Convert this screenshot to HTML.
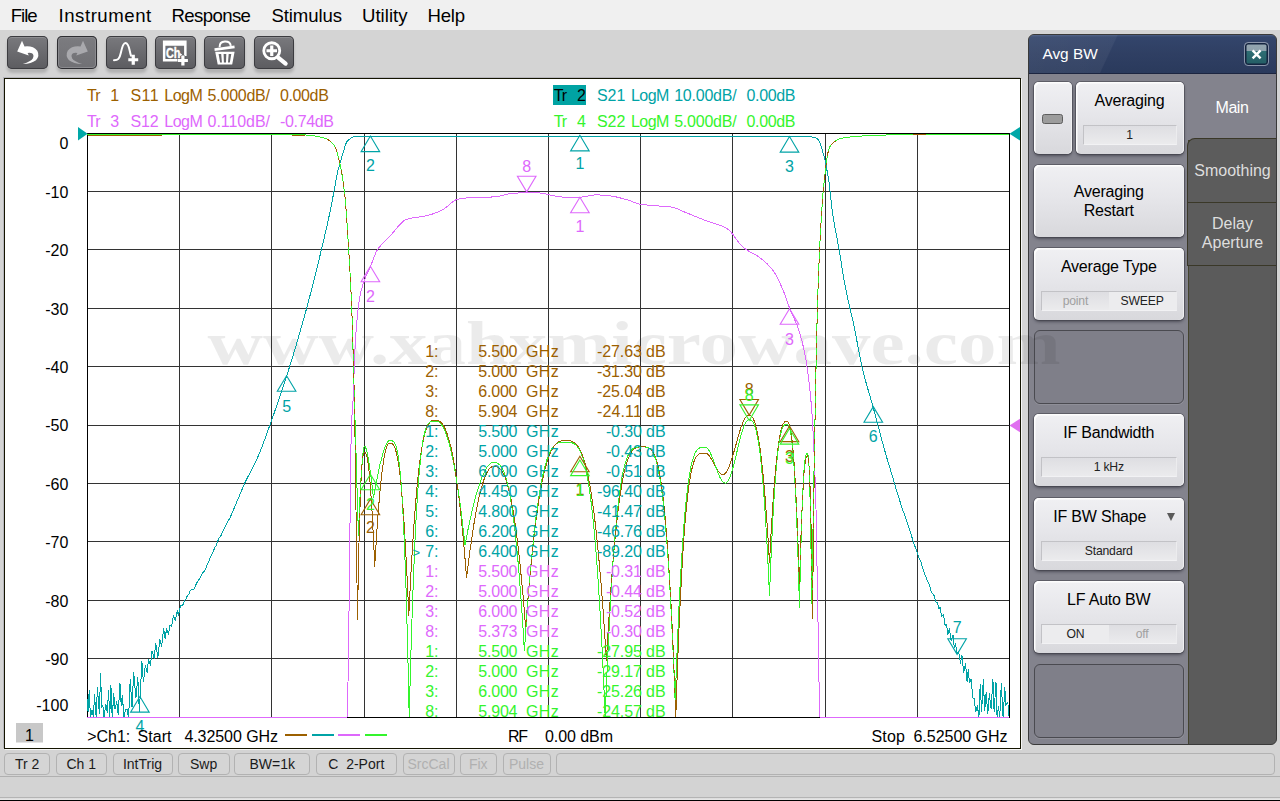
<!DOCTYPE html>
<html lang="en"><head><meta charset="utf-8"><title>Network Analyzer - Avg BW</title>
<style>
html,body{margin:0;padding:0;}
body{width:1280px;height:801px;position:relative;overflow:hidden;background:#d4d4d4;font-family:"Liberation Sans",sans-serif;color:#000;}
.abs{position:absolute;white-space:pre;}
#menubar{position:absolute;left:0;top:0;width:1280px;height:31px;background:#f0f0f0;}
.mi{position:absolute;top:3.8px;font-size:18.6px;line-height:24px;color:#000;white-space:pre;}
#toolbar{position:absolute;left:0;top:30px;width:1280px;height:48px;background:#d4d4d4;}
.tb{position:absolute;top:5.7px;width:40.6px;height:33px;border-radius:5px;box-sizing:border-box;
 background:linear-gradient(#7a7a7e 0%,#6c6c70 45%,#5c5c60 100%);box-shadow:0 4px 3px rgba(0,0,0,.17), inset 0 0 0 1px #3c3c40, inset 0 2px 0 rgba(255,255,255,.16);}
.tb.dis{background:linear-gradient(#7c7c80,#707074);box-shadow:0 4px 3px rgba(0,0,0,.17), inset 0 0 0 1px #2e2e32, inset 0 0 0 2px #8a8a8e;}
.tb svg{position:absolute;left:0;top:0;}
#plotpanel{position:absolute;left:4px;top:78px;width:1017px;height:671px;box-sizing:border-box;background:#fff;border:1px solid #141400;box-shadow:1px 1px 0 #f6f6f6,-1px -1px 0 #b6b6bc;}
#plotedge{display:none}
#status{position:absolute;left:0;top:750px;width:1280px;height:26px;background:#d3d3d3;}
.sb{position:absolute;top:3px;height:22px;box-sizing:border-box;border:1px solid #b2b2b2;border-radius:4px;background:#d5d5d5;
 font-size:14px;line-height:20px;text-align:center;color:#1a1a1a;white-space:pre;}
.sb.dis{color:#b0b0b0;background:#d4d4d4;}
#bottom{position:absolute;left:0;top:776px;width:1280px;height:25px;background:#d3d3d3;border-top:1px solid #b0b0b0;box-sizing:border-box;}
#bottom i{position:absolute;left:0;top:20px;width:1280px;height:1px;background:#b4b4b4;}
#bottom u{position:absolute;left:0;top:21px;width:1280px;height:2px;background:linear-gradient(#dadada,#e8e8e8);}
#bottom b{position:absolute;left:0;top:23px;width:1280px;height:1px;background:#000;}
/* side panel */
#side{position:absolute;left:1028px;top:34px;width:249px;height:711px;background:#5b5b5b;border-radius:6px;border:1px solid #3a3a3a;box-sizing:border-box;overflow:hidden;}
#shead{position:absolute;left:0;top:0;width:249px;height:38px;background:linear-gradient(115deg,rgba(255,255,255,.07) 0,rgba(255,255,255,.05) 33%,rgba(255,255,255,0) 33.5%),linear-gradient(#4a5d85 0,#33456b 2px,#2f3f63 50%,#2a3a5c 100%);border-bottom:1px solid #1c2540;}
#shead span{position:absolute;left:13.4px;top:8px;font-size:15.4px;line-height:22px;color:#fff;}
#sclose{position:absolute;left:215px;top:7px;width:25px;height:24px;border:1px solid #8a94aa;border-radius:4px;box-sizing:border-box;background:linear-gradient(#93a5b0 0%,#8fa2ad 36%,#2e6e74 37%,#245c64 100%);box-shadow:inset 0 0 0 1.5px #152540;}
#scol{position:absolute;left:0;top:39px;width:159px;height:672px;background:#83838d;border-right:1px solid #44442e;}
.tab{position:absolute;left:160px;width:87px;box-sizing:border-box;color:#dedede;font-size:16px;text-align:center;line-height:19px;}
#tab1{top:39px;height:66px;left:159px;width:88px;background:#83838d;color:#fff;letter-spacing:-0.45px;}
#tab2{top:103px;height:65px;left:158px;width:89px;padding-left:1px;background:#5c5c5c;border:1px solid #3a3828;border-right:none;border-top-left-radius:8px;}
#tab3{top:167px;height:64px;left:158px;width:89px;padding-left:1px;background:#5c5c5c;border:1px solid #3a3828;border-right:none;}
.kb{position:absolute;box-sizing:border-box;border-radius:5px;
 background:linear-gradient(#f0f0f3 0%,#e6e6ea 45%,#d8d8dc 100%);box-shadow:0 0 0 1px rgba(64,64,72,.55),0 2px 3px rgba(30,30,40,.5),inset 1.5px 1.5px 0 #fdfdfd,inset -1px 0 0 #f0f0f2;color:#000;font-size:16px;text-align:center;}
.kb .t{position:absolute;left:0;width:100%;text-align:center;white-space:pre;line-height:19px;letter-spacing:-0.2px;}
.kb .v{position:absolute;left:7px;right:7px;bottom:8.6px;height:20px;box-sizing:border-box;border:1px solid #c2c2c6;border-bottom-color:#f2f2f4;border-right-color:#ececee;
 background:linear-gradient(#dedee2,#ebebed);font-size:12.2px;letter-spacing:-0.2px;line-height:18px;color:#222;text-align:center;}
.kb .v .h{position:absolute;top:0;height:18px;width:50%;}
.slot{position:absolute;box-sizing:border-box;border-radius:6px;border:1px solid #4a4a50;background:#7f7f89;box-shadow:0 1px 0 rgba(255,255,255,.10),1px 0 0 rgba(255,255,255,.06);}
</style></head><body>
<div id="menubar"><span class="mi" style="left:10.8px;letter-spacing:-1.06px">File</span><span class="mi" style="left:58.5px;letter-spacing:0.54px">Instrument</span><span class="mi" style="left:171.5px;letter-spacing:-0.61px">Response</span><span class="mi" style="left:271.5px;letter-spacing:-0.12px">Stimulus</span><span class="mi" style="left:362.0px;letter-spacing:0.01px">Utility</span><span class="mi" style="left:427.5px;letter-spacing:-0.25px">Help</span></div>
<div id="toolbar"><div class="tb" style="left:7.3px"><svg width="41" height="33" viewBox="0 0 41 33"><path d="M15 4.8 L10.2 15.4 L21.8 19.6 L20.6 17 Q23 16.2 25 17.3 Q27.5 19 25.8 22.5 Q24 25.5 15.9 27.9 Q24 28 29 24.2 Q33 20 30.3 14.8 Q26 9.5 17.5 10.5 Z" fill="#fff"/></svg></div><div class="tb dis" style="left:56.9px"><svg width="41" height="33" viewBox="0 0 41 33"><path d="M26 4.8 L30.8 15.4 L19.2 19.6 L20.4 17 Q18 16.2 16 17.3 Q13.5 19 15.2 22.5 Q17 25.5 25.1 27.9 Q17 28 12 24.2 Q8 20 10.7 14.8 Q15 9.5 23.5 10.5 Z" fill="#a9a9ad"/></svg></div><div class="tb" style="left:106.2px"><svg width="41" height="33" viewBox="0 0 41 33"><path d="M8 24.2 C12 24.2 13.5 23 14.8 17 C16.5 9 17.8 7 19.4 7 C21.5 7 22.8 10 23.8 15 C24.3 17.5 24.6 18.5 25 19.8" fill="none" stroke="#fff" stroke-width="2" stroke-linecap="round"/><path d="M25.65 18.8 h3.2 v3.35 h3.35 v3.2 h-3.35 v3.35 h-3.2 v-3.35 h-3.35 v-3.2 h3.35 z" fill="#fff"/></svg></div><div class="tb" style="left:155.3px"><svg width="41" height="33" viewBox="0 0 41 33"><path d="M7.9 4.5 H31.6 V20 H29.1 V9.75 H10.4 V22.9 H23 V25.4 H7.9 Z" fill="#fff"/><text x="11" y="21.6" font-family="Liberation Sans, sans-serif" font-weight="bold" font-size="14" fill="#fff" stroke="#fff" stroke-width="0.4" textLength="14.4" lengthAdjust="spacingAndGlyphs">Ch</text><path d="M24.6 16.8 L27.2 18.6 L24.6 20.4 Z" fill="#fff"/><path d="M26.3 19.5 h3.2 v3.4 h3.4 v3.2 h-3.4 v3.4 h-3.2 v-3.4 h-3.4 v-3.2 h3.4 z" fill="#fff" stroke="#646468" stroke-width="0.8" paint-order="stroke"/></svg></div><div class="tb" style="left:204.4px"><svg width="41" height="33" viewBox="0 0 41 33"><path d="M15.6 11.2 Q15.4 5.8 20.8 5.5 Q26.2 5.2 26.8 9.8" fill="none" stroke="#fff" stroke-width="2"/><path d="M10.4 12.2 L30.4 9.4 L30.7 12.2 L10.7 15 Z" fill="#fff"/><path d="M11.2 15.8 H30.6 L28.2 28.6 H13.7 Z M14.6 18 L16.1 26.4 H17.9 L17.2 18 Z M19.6 18 L19.9 26.4 H22 L22.3 18 Z M24.7 18 L24 26.4 H25.8 L27.3 18 Z" fill="#fff" fill-rule="evenodd"/></svg></div><div class="tb" style="left:253.6px"><svg width="41" height="33" viewBox="0 0 41 33"><circle cx="17.75" cy="14.75" r="8" fill="none" stroke="#fff" stroke-width="2.8"/><path d="M24.2 21.6 L31.6 27.6" stroke="#fff" stroke-width="4.2" stroke-linecap="round"/><path d="M16.15 9.5 h3.2 v3.65 h3.65 v3.2 h-3.65 v3.65 h-3.2 v-3.65 h-3.65 v-3.2 h3.65 z" fill="#fff"/></svg></div></div>
<div id="plotedge"></div><div id="plotpanel"></div>
<div id="status"><div class="sb" style="left:4.4px;width:45.6px">Tr 2</div><div class="sb" style="left:55.6px;width:51.4px">Ch 1</div><div class="sb" style="left:112.5px;width:60.0px">IntTrig</div><div class="sb" style="left:177.5px;width:52.2px">Swp</div><div class="sb" style="left:234.4px;width:75.6px">BW=1k</div><div class="sb" style="left:315.6px;width:81.4px">C  2-Port</div><div class="sb dis" style="left:402.5px;width:52.0px">SrcCal</div><div class="sb dis" style="left:459.5px;width:37.5px">Fix</div><div class="sb dis" style="left:502.5px;width:48.0px">Pulse</div><div class="sb dis" style="left:555.5px;width:719.5px"></div></div><div id="bottom"><i></i><u></u><b></b></div>
<div id="side"><div id="shead"><span>Avg BW</span><div id="sclose"><svg width="23" height="22" viewBox="0 0 23 22"><path d="M7.6 7.4 L15.6 15.4 M15.6 7.4 L7.6 15.4" stroke="#fff" stroke-width="2.4" stroke-linecap="butt"/></svg></div></div><div id="scol"></div><div class="tab" id="tab1"><div style="margin-top:24px">Main</div></div><div class="tab" id="tab2"><div style="margin-top:21.8px">Smoothing</div></div><div class="tab" id="tab3"><div style="margin-top:11px">Delay<br>Aperture</div></div><div class="kb" style="left:5.0px;top:47.0px;width:37.5px;height:72.0px"><div style="position:absolute;left:8.3px;top:32px;width:20.5px;height:9.5px;box-sizing:border-box;border:1px solid #5e5e5e;border-radius:2.5px;background:#9c9c9c"></div></div><div class="kb" style="left:46.5px;top:47.0px;width:108.0px;height:72.0px"><div class="t" style="top:9.3px">Averaging</div><div class="v">1</div></div><div class="kb" style="left:5.0px;top:130.0px;width:149.5px;height:72.0px"><div class="t" style="top:17.3px">Averaging<br>Restart</div></div><div class="kb" style="left:5.0px;top:213.0px;width:149.5px;height:72.0px"><div class="t" style="top:9.3px">Average Type</div><div class="v"><span class="h" style="left:0;color:#a0a0a0">point</span><span class="h" style="left:50%;background:#ececee">SWEEP</span></div></div><div class="slot" style="left:4.5px;top:295px;width:150px;height:74px"></div><div class="kb" style="left:5.0px;top:379.0px;width:149.5px;height:72.0px"><div class="t" style="top:9.3px">IF Bandwidth</div><div class="v">1 kHz</div></div><div class="kb" style="left:5.0px;top:463.0px;width:149.5px;height:72.0px"><div class="t" style="top:9.3px;left:-9px">IF BW Shape</div><div style="position:absolute;right:9px;top:15px;width:0;height:0;border-left:4.5px solid transparent;border-right:4.5px solid transparent;border-top:8px solid #5a5a5a"></div><div class="v">Standard</div></div><div class="kb" style="left:5.0px;top:546.0px;width:149.5px;height:72.0px"><div class="t" style="top:9.3px">LF Auto BW</div><div class="v"><span class="h" style="left:0;background:#ececee">ON</span><span class="h" style="left:50%;color:#a0a0a0">off</span></div></div><div class="slot" style="left:4.5px;top:628.5px;width:150px;height:74px"></div></div>
<svg id="plot" class="abs" style="left:0;top:0" width="1280" height="801" viewBox="0 0 1280 801" font-family="Liberation Sans, sans-serif" font-size="16">
<text x="207.5" y="364" font-family="Liberation Serif, serif" font-weight="bold" font-size="62" fill="rgba(0,0,0,0.078)" textLength="853" lengthAdjust="spacingAndGlyphs">www.xahxmicrowave.com</text>
<path d="M179.5 133 V718 M271.5 133 V718 M364.5 133 V718 M456.5 133 V718 M548.5 133 V718 M640.5 133 V718 M732.5 133 V718 M825.5 133 V718 M917.5 133 V718 M87 191.5 H1010 M87 249.5 H1010 M87 308.5 H1010 M87 366.5 H1010 M87 425.5 H1010 M87 483.5 H1010 M87 541.5 H1010 M87 600.5 H1010 M87 658.5 H1010" stroke="#333" stroke-width="1" fill="none" shape-rendering="crispEdges"/><path d="M87.5 133 V718 M1009.5 133 V718 M87 133.5 H1010 M87 717.5 H1010" stroke="#000" stroke-width="1" fill="none" shape-rendering="crispEdges"/>
<text x="68.3" y="149.0" fill="#000" text-anchor="end">0</text><text x="68.3" y="197.7" fill="#000" text-anchor="end">-10</text><text x="68.3" y="256.1" fill="#000" text-anchor="end">-20</text><text x="68.3" y="314.5" fill="#000" text-anchor="end">-30</text><text x="68.3" y="372.9" fill="#000" text-anchor="end">-40</text><text x="68.3" y="431.3" fill="#000" text-anchor="end">-50</text><text x="68.3" y="489.7" fill="#000" text-anchor="end">-60</text><text x="68.3" y="548.1" fill="#000" text-anchor="end">-70</text><text x="68.3" y="606.5" fill="#000" text-anchor="end">-80</text><text x="68.3" y="664.9" fill="#000" text-anchor="end">-90</text><text x="68.3" y="711.0" fill="#000" text-anchor="end">-100</text>
<text x="87.1" y="101.3" fill="#9c6000" textLength="13.5" lengthAdjust="spacing">Tr</text><text x="110.3" y="101.3" fill="#9c6000">1</text><text x="130.4" y="101.3" fill="#9c6000" textLength="28.3" lengthAdjust="spacing">S11</text><text x="164.3" y="101.3" fill="#9c6000" textLength="38.5" lengthAdjust="spacing">LogM</text><text x="207.6" y="101.3" fill="#9c6000" textLength="62.4" lengthAdjust="spacing">5.000dB/</text><text x="280.0" y="101.3" fill="#9c6000" textLength="48.8" lengthAdjust="spacing">0.00dB</text><text x="87.1" y="126.8" fill="#de68fc" textLength="13.5" lengthAdjust="spacing">Tr</text><text x="110.3" y="126.8" fill="#de68fc">3</text><text x="130.4" y="126.8" fill="#de68fc" textLength="28.3" lengthAdjust="spacing">S12</text><text x="164.3" y="126.8" fill="#de68fc" textLength="38.5" lengthAdjust="spacing">LogM</text><text x="207.6" y="126.8" fill="#de68fc" textLength="62.4" lengthAdjust="spacing">0.110dB/</text><text x="280.0" y="126.8" fill="#de68fc" textLength="54.0" lengthAdjust="spacing">-0.74dB</text><rect x="553" y="85" width="33" height="20" fill="#00a3a3"/><text x="553.7" y="101.3" fill="#000" textLength="13.5" lengthAdjust="spacing">Tr</text><text x="576.9" y="101.3" fill="#000">2</text><text x="597.0" y="101.3" fill="#00a3a6" textLength="28.3" lengthAdjust="spacing">S21</text><text x="630.9" y="101.3" fill="#00a3a6" textLength="38.5" lengthAdjust="spacing">LogM</text><text x="674.2" y="101.3" fill="#00a3a6" textLength="62.4" lengthAdjust="spacing">10.00dB/</text><text x="746.6" y="101.3" fill="#00a3a6" textLength="48.8" lengthAdjust="spacing">0.00dB</text><text x="553.7" y="126.8" fill="#34f42c" textLength="13.5" lengthAdjust="spacing">Tr</text><text x="576.9" y="126.8" fill="#34f42c">4</text><text x="597.0" y="126.8" fill="#34f42c" textLength="28.3" lengthAdjust="spacing">S22</text><text x="630.9" y="126.8" fill="#34f42c" textLength="38.5" lengthAdjust="spacing">LogM</text><text x="674.2" y="126.8" fill="#34f42c" textLength="62.4" lengthAdjust="spacing">5.000dB/</text><text x="746.6" y="126.8" fill="#34f42c" textLength="48.8" lengthAdjust="spacing">0.00dB</text>
<path d="M87.0 134.5 L88.0 134.5 L89.0 134.5 L90.0 134.5 L91.0 134.5 L92.0 134.5 L93.0 134.5 L94.0 134.5 L95.0 134.5 L96.0 134.5 L97.0 134.5 L98.0 134.5 L99.0 134.5 L100.0 134.5 L101.0 134.5 L102.0 134.5 L103.0 134.5 L104.0 134.5 L105.0 134.5 L106.0 134.5 L107.0 134.5 L108.0 134.5 L109.0 134.5 L110.0 134.5 L111.0 134.5 L112.0 134.5 L113.0 134.5 L114.1 134.5 L115.1 134.5 L116.1 134.5 L117.1 134.5 L118.1 134.5 L119.1 134.5 L120.1 134.5 L121.1 134.5 L122.1 134.5 L123.1 134.5 L124.1 134.5 L125.1 134.5 L126.1 134.5 L127.1 134.5 L128.1 134.5 L129.1 134.5 L130.1 134.5 L131.1 134.5 L132.1 134.5 L133.1 134.5 L134.1 134.5 L135.1 134.5 L136.1 134.5 L137.1 134.5 L138.1 134.5 L139.1 134.5 L140.1 134.5 L141.1 134.5 L142.1 134.5 L143.1 134.5 L144.1 134.5 L145.1 134.5 L146.1 134.5 L147.1 134.5 L148.1 134.5 L149.1 134.5 L150.1 134.5 L151.1 134.5 L152.1 134.5 L153.1 134.5 L154.1 134.5 L155.1 134.5 L156.1 134.5 L157.1 134.5 L158.1 134.5 L159.1 134.5 L160.1 134.5 L161.1 134.5 L162.1 134.5 L163.1 134.5 L164.1 134.5 L165.1 134.5 L166.1 134.5 L167.1 134.5 L168.2 134.5 L169.2 134.5 L170.2 134.5 L171.2 134.5 L172.2 134.5 L173.2 134.5 L174.2 134.5 L175.2 134.5 L176.2 134.5 L177.2 134.5 L178.2 134.5 L179.2 134.5 L180.2 134.5 L181.2 134.5 L182.2 134.5 L183.2 134.5 L184.2 134.5 L185.2 134.5 L186.2 134.5 L187.2 134.5 L188.2 134.5 L189.2 134.5 L190.2 134.5 L191.2 134.5 L192.2 134.5 L193.2 134.5 L194.2 134.5 L195.2 134.5 L196.2 134.5 L197.2 134.5 L198.2 134.5 L199.2 134.5 L200.2 134.5 L201.2 134.5 L202.2 134.5 L203.2 134.5 L204.2 134.5 L205.2 134.5 L206.2 134.5 L207.2 134.5 L208.2 134.5 L209.2 134.5 L210.2 134.5 L211.2 134.5 L212.2 134.5 L213.2 134.5 L214.2 134.5 L215.2 134.5 L216.2 134.5 L217.2 134.5 L218.2 134.5 L219.2 134.5 L220.2 134.5 L221.3 134.5 L222.3 134.5 L223.3 134.5 L224.3 134.5 L225.3 134.5 L226.3 134.5 L227.3 134.5 L228.3 134.5 L229.3 134.5 L230.3 134.5 L231.3 134.5 L232.3 134.5 L233.3 134.5 L234.3 134.5 L235.3 134.5 L236.3 134.5 L237.3 134.5 L238.3 134.5 L239.3 134.5 L240.3 134.5 L241.3 134.5 L242.3 134.5 L243.3 134.5 L244.3 134.5 L245.3 134.5 L246.3 134.5 L247.3 134.5 L248.3 134.5 L249.3 134.5 L250.3 134.5 L251.3 134.5 L252.3 134.5 L253.3 134.5 L254.3 134.5 L255.3 134.5 L256.3 134.5 L257.3 134.5 L258.3 134.5 L259.3 134.5 L260.3 134.5 L261.3 134.5 L262.3 134.5 L263.3 134.5 L264.3 134.5 L265.3 134.5 L266.3 134.5 L267.3 134.5 L268.3 134.5 L269.3 134.5 L270.3 134.5 L271.3 134.5 L272.3 134.5 L273.3 134.5 L274.4 134.5 L275.4 134.5 L276.4 134.5 L277.4 134.6 L278.4 134.6 L279.4 134.6 L280.4 134.6 L281.4 134.6 L282.4 134.6 L283.4 134.6 L284.4 134.6 L285.4 134.6 L286.4 134.6 L287.4 134.6 L288.4 134.6 L289.4 134.6 L290.4 134.6 L291.4 134.6 L292.4 134.6 L293.4 134.6 L294.4 134.6 L295.4 134.6 L296.4 134.6 L297.4 134.6 L298.4 134.6 L299.4 134.6 L300.4 134.6 L301.4 134.6 L302.4 134.7 L303.4 134.7 L304.4 134.8 L305.4 134.9 L306.4 135.0 L307.4 135.1 L308.4 135.2 L309.4 135.3 L310.4 135.4 L311.4 135.5 L312.4 135.7 L313.4 135.8 L314.4 135.9 L315.4 136.1 L316.4 136.3 L317.4 136.5 L318.4 136.7 L319.4 136.9 L320.4 137.1 L321.4 137.3 L322.4 137.5 L323.4 137.8 L324.4 138.1 L325.4 138.4 L326.4 138.8 L327.4 139.3 L328.5 139.9 L329.5 140.6 L330.5 141.5 L331.5 142.4 L332.5 143.5 L333.5 144.6 L334.5 145.9 L335.5 147.5 L336.5 149.8 L337.5 153.4 L338.5 157.9 L339.5 162.3 L340.5 166.5 L341.5 171.3 L342.5 177.5 L343.5 184.7 L344.5 192.1 L345.5 202.4 L346.5 215.5 L347.5 230.6 L348.5 246.6 L349.5 263.1 L350.5 281.2 L351.5 302.4 L352.5 330.1 L353.5 368.2 L354.5 400.0 L355.0 436.6 L355.5 473.2 L356.0 509.8 L356.5 546.3 L357.0 582.9 L357.5 619.5 L357.8 601.9 L358.1 585.4 L358.4 570.1 L358.7 556.0 L359.0 543.0 L359.3 531.0 L359.6 520.0 L359.9 510.1 L360.2 501.1 L360.5 493.0 L360.8 485.8 L361.1 479.5 L361.4 474.0 L361.7 469.2 L362.0 465.1 L362.3 461.7 L362.6 458.9 L362.9 456.7 L363.2 455.0 L363.5 453.8 L363.8 453.0 L364.1 452.5 L364.4 452.3 L364.7 452.3 L365.1 452.4 L365.5 452.9 L365.9 453.6 L366.4 454.8 L366.8 456.3 L367.2 458.2 L367.6 460.5 L368.0 463.2 L368.4 466.3 L368.9 469.9 L369.3 473.9 L369.7 478.3 L370.1 483.1 L370.5 488.4 L370.9 494.2 L371.4 500.4 L371.8 507.1 L372.2 514.2 L372.6 521.8 L373.0 529.9 L373.4 538.5 L373.9 547.5 L374.3 557.0 L374.7 567.0 L375.3 555.8 L376.0 545.2 L376.6 535.1 L377.2 525.6 L377.9 516.7 L378.5 508.3 L379.2 500.5 L379.8 493.3 L380.4 486.5 L381.1 480.3 L381.7 474.6 L382.4 469.5 L383.0 464.8 L383.6 460.6 L384.3 457.0 L384.9 453.7 L385.5 451.0 L386.2 448.7 L386.8 446.8 L387.4 445.3 L388.1 444.2 L388.7 443.5 L389.4 443.1 L390.0 443.0 L390.8 443.0 L391.6 443.2 L392.3 443.7 L393.1 444.4 L393.9 445.6 L394.7 447.3 L395.5 449.4 L396.2 452.2 L397.0 455.6 L397.8 459.7 L398.6 464.5 L399.4 470.1 L400.2 476.6 L400.9 483.9 L401.7 492.2 L402.5 501.5 L403.3 511.8 L404.1 523.1 L404.8 535.5 L405.6 549.1 L406.4 563.9 L407.2 579.8 L408.0 597.1 L408.8 615.6 L409.9 593.1 L411.0 572.4 L412.1 553.3 L413.2 535.9 L414.3 520.1 L415.4 505.7 L416.5 492.8 L417.6 481.2 L418.7 470.9 L419.8 461.8 L420.9 453.8 L422.0 446.9 L423.1 441.0 L424.2 436.1 L425.3 431.9 L426.4 428.6 L427.6 425.9 L428.7 423.9 L429.8 422.4 L430.9 421.4 L432.0 420.8 L433.1 420.5 L434.2 420.3 L435.3 420.3 L436.6 420.4 L437.9 420.6 L439.2 421.1 L440.5 422.0 L441.8 423.3 L443.1 425.0 L444.4 427.3 L445.7 430.0 L447.0 433.4 L448.3 437.5 L449.6 442.1 L451.0 447.5 L452.3 453.7 L453.6 460.5 L454.9 468.2 L456.2 476.8 L457.5 486.1 L458.8 496.4 L460.1 507.6 L461.4 519.7 L462.7 532.7 L464.0 546.8 L465.3 561.9 L466.6 578.0 L467.7 568.4 L468.9 559.2 L470.0 550.5 L471.2 542.3 L472.3 534.5 L473.4 527.1 L474.6 520.2 L475.7 513.7 L476.8 507.7 L478.0 502.1 L479.1 496.9 L480.2 492.2 L481.4 487.8 L482.5 483.9 L483.7 480.4 L484.8 477.3 L485.9 474.6 L487.1 472.4 L488.2 470.4 L489.3 468.9 L490.5 467.8 L491.6 467.0 L492.8 466.5 L493.9 466.4 L495.2 466.4 L496.5 466.7 L497.9 467.2 L499.2 468.0 L500.5 469.3 L501.8 471.0 L503.1 473.2 L504.5 476.0 L505.8 479.4 L507.1 483.5 L508.4 488.2 L509.8 493.6 L511.1 499.8 L512.4 506.8 L513.7 514.6 L515.0 523.3 L516.4 532.9 L517.7 543.4 L519.0 554.8 L520.3 567.2 L521.6 580.7 L523.0 595.1 L524.3 610.7 L525.6 627.3 L527.3 606.3 L528.9 587.0 L530.6 569.1 L532.2 552.7 L533.9 537.7 L535.5 524.1 L537.2 511.8 L538.8 500.7 L540.5 490.7 L542.1 481.9 L543.8 474.2 L545.5 467.5 L547.1 461.7 L548.8 456.7 L550.4 452.6 L552.1 449.2 L553.7 446.5 L555.4 444.5 L557.0 442.9 L558.7 441.8 L560.3 441.2 L562.0 440.8 L563.6 440.6 L565.3 440.6 L567.0 440.6 L568.7 440.7 L570.4 440.9 L572.1 441.4 L573.9 442.3 L575.6 443.6 L577.3 445.4 L579.0 447.9 L580.7 451.1 L582.4 455.2 L584.1 460.2 L585.8 466.2 L587.6 473.5 L589.3 482.0 L591.0 491.9 L592.7 503.2 L594.4 516.2 L596.1 530.8 L597.8 547.3 L599.5 565.8 L601.3 586.2 L603.0 608.8 L604.7 633.7 L606.4 661.0 L607.9 635.0 L609.4 611.1 L610.8 589.4 L612.3 569.8 L613.8 552.0 L615.3 536.0 L616.8 521.8 L618.2 509.2 L619.7 498.0 L621.2 488.3 L622.7 480.0 L624.1 472.8 L625.6 466.8 L627.1 461.8 L628.6 457.7 L630.1 454.4 L631.5 451.9 L633.0 450.0 L634.5 448.7 L636.0 447.8 L637.5 447.3 L638.9 447.0 L640.4 446.9 L641.9 446.9 L643.3 446.9 L644.7 446.9 L646.1 447.1 L647.5 447.4 L649.0 447.9 L650.4 448.9 L651.8 450.3 L653.2 452.3 L654.6 455.2 L656.0 458.9 L657.4 463.8 L658.8 469.9 L660.3 477.4 L661.7 486.6 L663.1 497.7 L664.5 510.8 L665.9 526.2 L667.3 544.0 L668.7 564.6 L670.1 588.2 L671.6 614.9 L673.0 645.1 L674.4 679.1 L675.8 717.0 L677.0 680.5 L678.2 647.7 L679.4 618.4 L680.7 592.5 L681.9 569.5 L683.1 549.5 L684.3 532.0 L685.5 516.9 L686.8 504.0 L688.0 493.0 L689.2 483.9 L690.4 476.3 L691.6 470.2 L692.8 465.3 L694.0 461.5 L695.3 458.6 L696.5 456.5 L697.7 455.1 L698.9 454.1 L700.1 453.5 L701.4 453.2 L702.6 453.0 L703.8 453.0 L705.0 453.0 L705.9 453.1 L706.8 453.5 L707.7 454.2 L708.6 455.1 L709.5 456.1 L710.4 457.4 L711.3 458.9 L712.2 460.4 L713.1 462.1 L714.0 463.8 L714.9 465.4 L715.8 467.1 L716.7 468.6 L717.6 470.1 L718.5 471.4 L719.4 472.4 L720.3 473.3 L721.2 474.0 L722.1 474.4 L723.0 474.5 L724.3 474.1 L725.6 473.0 L726.9 471.3 L728.1 468.8 L729.4 465.8 L730.7 462.3 L732.0 458.3 L733.3 454.0 L734.6 449.5 L735.9 444.9 L737.2 440.2 L738.5 435.7 L739.7 431.4 L741.0 427.4 L742.3 423.9 L743.6 420.9 L744.9 418.4 L746.2 416.7 L747.5 415.6 L748.8 415.2 L749.6 415.3 L750.5 415.5 L751.3 416.1 L752.2 417.1 L753.1 418.4 L753.9 420.2 L754.8 422.5 L755.7 425.3 L756.5 428.7 L757.4 432.6 L758.3 437.2 L759.1 442.4 L760.0 448.2 L760.9 454.8 L761.7 462.0 L762.6 470.0 L763.4 478.8 L764.3 488.3 L765.2 498.6 L766.0 509.8 L766.9 521.7 L767.8 534.5 L768.6 548.2 L769.5 562.8 L770.2 549.1 L770.9 536.3 L771.6 524.2 L772.3 512.9 L773.0 502.4 L773.7 492.6 L774.4 483.5 L775.1 475.2 L775.8 467.5 L776.5 460.5 L777.2 454.2 L777.9 448.5 L778.6 443.4 L779.3 438.9 L780.0 435.0 L780.7 431.7 L781.4 428.9 L782.1 426.6 L782.8 424.8 L783.5 423.4 L784.2 422.4 L784.9 421.8 L785.6 421.5 L786.2 421.4 L786.8 421.4 L787.4 421.7 L787.9 422.1 L788.5 422.9 L789.0 424.2 L789.6 425.8 L790.1 428.1 L790.7 430.8 L791.2 434.2 L791.8 438.3 L792.3 443.1 L792.9 448.6 L793.4 454.9 L794.0 462.1 L794.5 470.1 L795.1 479.1 L795.6 489.0 L796.2 499.9 L796.7 511.8 L797.3 524.7 L797.8 538.8 L798.4 554.0 L798.9 570.3 L799.5 587.8 L799.8 575.5 L800.1 563.9 L800.5 552.9 L800.8 542.6 L801.1 532.9 L801.5 523.9 L801.8 515.5 L802.1 507.7 L802.4 500.6 L802.8 494.0 L803.1 488.0 L803.4 482.6 L803.7 477.7 L804.0 473.4 L804.4 469.6 L804.7 466.3 L805.0 463.6 L805.3 461.2 L805.7 459.4 L806.0 457.9 L806.3 456.9 L806.6 456.2 L807.0 455.9 L807.3 455.8 L807.5 455.8 L807.7 456.1 L807.9 456.6 L808.2 457.4 L808.4 458.6 L808.6 460.3 L808.8 462.6 L809.0 465.4 L809.2 468.8 L809.5 472.8 L809.7 477.5 L809.9 483.0 L810.1 489.3 L810.3 496.3 L810.5 504.2 L810.8 513.0 L811.0 522.7 L811.2 533.3 L811.4 545.0 L811.6 557.6 L811.9 571.2 L812.1 586.0 L812.3 601.8 L812.5 618.8 L813.5 527.4 L814.5 450.3 L815.5 391.5 L816.5 343.0 L817.5 304.2 L818.5 275.0 L819.5 251.4 L820.5 231.6 L821.5 214.3 L822.5 199.1 L823.5 186.9 L824.5 178.5 L825.5 169.5 L826.5 160.8 L827.5 155.0 L828.5 150.1 L829.5 147.4 L830.5 145.8 L831.5 144.5 L832.6 143.4 L833.6 142.5 L834.6 141.6 L835.6 140.8 L836.6 140.2 L837.6 139.7 L838.6 139.3 L839.6 138.9 L840.6 138.6 L841.6 138.3 L842.6 138.0 L843.6 137.8 L844.6 137.6 L845.6 137.5 L846.6 137.3 L847.6 137.2 L848.6 137.1 L849.6 137.0 L850.6 136.9 L851.6 136.8 L852.6 136.7 L853.6 136.6 L854.6 136.5 L855.6 136.5 L856.6 136.4 L857.6 136.3 L858.6 136.2 L859.6 136.1 L860.6 136.1 L861.6 136.0 L862.6 135.9 L863.6 135.8 L864.6 135.8 L865.6 135.7 L866.6 135.7 L867.6 135.6 L868.6 135.6 L869.6 135.5 L870.6 135.5 L871.7 135.5 L872.7 135.4 L873.7 135.4 L874.7 135.4 L875.7 135.3 L876.7 135.3 L877.7 135.2 L878.7 135.2 L879.7 135.2 L880.7 135.1 L881.7 135.1 L882.7 135.1 L883.7 135.0 L884.7 135.0 L885.7 135.0 L886.7 134.9 L887.7 134.9 L888.7 134.9 L889.7 134.9 L890.7 134.8 L891.7 134.8 L892.7 134.8 L893.7 134.8 L894.7 134.7 L895.7 134.7 L896.7 134.7 L897.7 134.7 L898.7 134.6 L899.7 134.6 L900.7 134.6 L901.7 134.6 L902.7 134.6 L903.7 134.6 L904.7 134.6 L905.7 134.5 L906.7 134.5 L907.7 134.5 L908.7 134.5 L909.7 134.5 L910.8 134.5 L911.8 134.5 L912.8 134.5 L913.8 134.5 L914.8 134.5 L915.8 134.5 L916.8 134.5 L917.8 134.5 L918.8 134.5 L919.8 134.5 L920.8 134.5 L921.8 134.5 L922.8 134.5 L923.8 134.5 L924.8 134.5 L925.8 134.5 L926.8 134.5 L927.8 134.5 L928.8 134.5 L929.8 134.5 L930.8 134.5 L931.8 134.5 L932.8 134.5 L933.8 134.5 L934.8 134.5 L935.8 134.5 L936.8 134.5 L937.8 134.5 L938.8 134.5 L939.8 134.5 L940.8 134.5 L941.8 134.5 L942.8 134.5 L943.8 134.5 L944.8 134.5 L945.8 134.5 L946.8 134.5 L947.8 134.5 L948.8 134.5 L949.8 134.5 L950.9 134.5 L951.9 134.5 L952.9 134.5 L953.9 134.5 L954.9 134.5 L955.9 134.5 L956.9 134.5 L957.9 134.5 L958.9 134.5 L959.9 134.5 L960.9 134.5 L961.9 134.5 L962.9 134.5 L963.9 134.5 L964.9 134.5 L965.9 134.5 L966.9 134.5 L967.9 134.5 L968.9 134.5 L969.9 134.5 L970.9 134.5 L971.9 134.5 L972.9 134.5 L973.9 134.5 L974.9 134.5 L975.9 134.5 L976.9 134.5 L977.9 134.5 L978.9 134.5 L979.9 134.5 L980.9 134.5 L981.9 134.5 L982.9 134.5 L983.9 134.5 L984.9 134.5 L985.9 134.5 L986.9 134.5 L987.9 134.5 L988.9 134.5 L990.0 134.5 L991.0 134.5 L992.0 134.5 L993.0 134.5 L994.0 134.5 L995.0 134.5 L996.0 134.5 L997.0 134.5 L998.0 134.5 L999.0 134.5 L1000.0 134.5 L1001.0 134.5 L1002.0 134.5 L1003.0 134.5 L1004.0 134.5 L1005.0 134.5 L1006.0 134.5 L1007.0 134.5 L1008.0 134.5 L1009.0 134.5" fill="none" stroke="#9c6000" stroke-width="1" stroke-linejoin="round" shape-rendering="crispEdges"/>
<path d="M87.0 698.7 L88.1 712.0 L89.2 690.6 L90.5 717.5 L92.0 709.6 L93.4 717.5 L94.5 694.9 L96.2 717.5 L97.4 687.2 L99.3 713.5 L100.6 673.9 L101.7 707.8 L102.9 705.5 L104.0 717.5 L105.8 704.1 L107.3 712.2 L108.6 690.2 L109.7 717.5 L110.9 685.1 L112.2 717.5 L113.8 693.8 L115.0 709.1 L116.7 701.7 L118.2 714.5 L120.0 683.3 L121.2 705.4 L122.3 695.1 L124.0 717.5 L125.5 709.5 L127.1 709.7 L128.6 717.5 L130.2 679.8 L132.0 707.1 L133.7 672.5 L135.9 697.9 L137.8 677.5 L139.4 712.0 L141.9 661.0 L143.4 681.9 L145.3 665.5 L147.1 672.4 L148.5 659.9 L150.4 665.5 L152.0 650.8 L154.1 658.3 L155.8 643.5 L157.9 657.5 L159.9 639.3 L161.6 646.3 L163.7 628.7 L165.1 638.3 L166.6 628.9 L168.4 634.5 L169.9 624.9 L171.6 627.0 L173.4 615.1 L175.3 620.3 L177.2 610.7 L178.5 615.1 L180.5 605.3 L182.6 605.8 L184.2 601.1 L186.1 598.8 L187.4 595.4 L188.9 594.2 L190.2 590.7 L191.7 589.1 L192.3 589.2 L193.8 589.3 L195.3 586.3 L196.8 582.7 L198.3 580.6 L199.8 578.2 L201.3 575.7 L202.8 572.5 L204.3 571.3 L205.8 568.7 L207.3 564.6 L208.8 561.5 L210.3 557.5 L211.8 554.2 L213.3 551.2 L214.8 547.7 L216.3 545.3 L217.8 541.0 L219.3 537.7 L220.8 536.0 L222.3 532.4 L223.8 529.0 L225.3 526.6 L226.8 523.1 L228.3 520.7 L229.8 518.1 L231.3 514.8 L232.8 511.3 L234.4 507.5 L235.9 504.1 L237.4 500.3 L238.9 497.0 L240.4 493.2 L241.9 489.8 L243.4 486.1 L244.9 482.8 L246.4 479.8 L247.9 476.8 L249.4 473.9 L250.9 471.0 L252.4 468.2 L253.9 465.3 L255.4 462.3 L256.9 459.1 L258.4 455.7 L259.9 452.1 L261.4 448.3 L262.9 444.4 L264.4 440.3 L265.9 436.2 L267.4 432.0 L268.9 427.8 L270.4 423.6 L271.9 419.4 L273.4 415.2 L274.9 410.9 L276.4 406.6 L277.9 402.3 L279.4 397.9 L280.9 393.5 L282.4 389.0 L283.9 384.4 L285.4 379.9 L286.9 375.2 L288.4 370.5 L289.9 365.7 L291.4 360.9 L292.9 356.0 L294.4 351.0 L295.9 346.0 L297.4 341.0 L298.9 335.8 L300.4 330.6 L301.9 325.3 L303.4 320.0 L304.9 314.6 L306.4 309.1 L307.9 303.5 L309.4 297.9 L310.9 292.1 L312.4 286.3 L313.9 280.3 L315.5 274.3 L317.0 268.1 L318.5 261.9 L320.0 255.6 L321.5 249.3 L323.0 242.9 L324.5 236.6 L326.0 230.1 L327.5 223.5 L329.0 216.6 L330.5 209.4 L332.0 201.8 L333.5 194.0 L335.0 186.0 L336.5 177.5 L338.0 170.5 L339.5 164.9 L341.0 159.6 L342.5 154.5 L344.0 149.6 L345.5 144.7 L347.0 141.4 L348.5 139.8 L350.0 138.8 L351.5 137.8 L353.0 137.0 L354.5 136.6 L356.0 136.6 L357.5 136.6 L359.0 136.6 L360.5 136.6 L362.0 136.5 L363.5 136.5 L365.0 136.5 L366.5 136.5 L368.0 136.5 L369.5 136.5 L371.0 136.5 L372.5 136.5 L374.0 136.5 L375.5 136.5 L377.0 136.5 L378.5 136.5 L380.0 136.5 L381.5 136.5 L383.0 136.5 L384.5 136.5 L386.0 136.5 L387.5 136.5 L389.0 136.5 L390.5 136.5 L392.0 136.5 L393.5 136.5 L395.0 136.5 L396.5 136.5 L398.1 136.5 L399.6 136.5 L401.1 136.5 L402.6 136.5 L404.1 136.5 L405.6 136.5 L407.1 136.5 L408.6 136.5 L410.1 136.5 L411.6 136.5 L413.1 136.5 L414.6 136.5 L416.1 136.5 L417.6 136.5 L419.1 136.5 L420.6 136.5 L422.1 136.5 L423.6 136.5 L425.1 136.5 L426.6 136.5 L428.1 136.5 L429.6 136.5 L431.1 136.5 L432.6 136.5 L434.1 136.5 L435.6 136.5 L437.1 136.5 L438.6 136.5 L440.1 136.5 L441.6 136.5 L443.1 136.5 L444.6 136.5 L446.1 136.5 L447.6 136.5 L449.1 136.5 L450.6 136.5 L452.1 136.5 L453.6 136.5 L455.1 136.5 L456.6 136.5 L458.1 136.5 L459.6 136.5 L461.1 136.5 L462.6 136.5 L464.1 136.5 L465.6 136.5 L467.1 136.5 L468.6 136.5 L470.1 136.5 L471.6 136.5 L473.1 136.5 L474.6 136.5 L476.1 136.5 L477.6 136.5 L479.1 136.5 L480.7 136.5 L482.2 136.5 L483.7 136.5 L485.2 136.5 L486.7 136.5 L488.2 136.5 L489.7 136.5 L491.2 136.5 L492.7 136.5 L494.2 136.5 L495.7 136.5 L497.2 136.5 L498.7 136.5 L500.2 136.5 L501.7 136.5 L503.2 136.5 L504.7 136.5 L506.2 136.5 L507.7 136.5 L509.2 136.5 L510.7 136.5 L512.2 136.5 L513.7 136.5 L515.2 136.5 L516.7 136.5 L518.2 136.5 L519.7 136.5 L521.2 136.5 L522.7 136.5 L524.2 136.5 L525.7 136.5 L527.2 136.5 L528.7 136.5 L530.2 136.5 L531.7 136.5 L533.2 136.5 L534.7 136.5 L536.2 136.5 L537.7 136.5 L539.2 136.5 L540.7 136.5 L542.2 136.5 L543.7 136.5 L545.2 136.5 L546.7 136.5 L548.2 136.5 L549.7 136.5 L551.2 136.5 L552.7 136.5 L554.2 136.5 L555.7 136.5 L557.2 136.5 L558.7 136.5 L560.2 136.5 L561.8 136.5 L563.3 136.5 L564.8 136.5 L566.3 136.5 L567.8 136.5 L569.3 136.5 L570.8 136.5 L572.3 136.5 L573.8 136.5 L575.3 136.5 L576.8 136.5 L578.3 136.5 L579.8 136.5 L581.3 136.5 L582.8 136.5 L584.3 136.5 L585.8 136.5 L587.3 136.5 L588.8 136.5 L590.3 136.5 L591.8 136.5 L593.3 136.5 L594.8 136.5 L596.3 136.5 L597.8 136.5 L599.3 136.5 L600.8 136.5 L602.3 136.5 L603.8 136.5 L605.3 136.5 L606.8 136.5 L608.3 136.5 L609.8 136.5 L611.3 136.5 L612.8 136.5 L614.3 136.5 L615.8 136.5 L617.3 136.5 L618.8 136.5 L620.3 136.5 L621.8 136.5 L623.3 136.5 L624.8 136.5 L626.3 136.5 L627.8 136.5 L629.3 136.5 L630.8 136.5 L632.3 136.5 L633.8 136.5 L635.3 136.5 L636.8 136.5 L638.3 136.5 L639.8 136.5 L641.3 136.5 L642.8 136.5 L644.4 136.5 L645.9 136.5 L647.4 136.5 L648.9 136.5 L650.4 136.5 L651.9 136.5 L653.4 136.5 L654.9 136.5 L656.4 136.5 L657.9 136.5 L659.4 136.5 L660.9 136.5 L662.4 136.5 L663.9 136.5 L665.4 136.5 L666.9 136.5 L668.4 136.5 L669.9 136.5 L671.4 136.5 L672.9 136.5 L674.4 136.5 L675.9 136.5 L677.4 136.5 L678.9 136.5 L680.4 136.5 L681.9 136.5 L683.4 136.5 L684.9 136.5 L686.4 136.5 L687.9 136.5 L689.4 136.5 L690.9 136.5 L692.4 136.5 L693.9 136.5 L695.4 136.5 L696.9 136.5 L698.4 136.5 L699.9 136.5 L701.4 136.5 L702.9 136.5 L704.4 136.5 L705.9 136.5 L707.4 136.5 L708.9 136.5 L710.4 136.5 L711.9 136.5 L713.4 136.5 L714.9 136.5 L716.4 136.5 L717.9 136.5 L719.4 136.5 L720.9 136.5 L722.4 136.5 L723.9 136.5 L725.4 136.5 L727.0 136.5 L728.5 136.5 L730.0 136.5 L731.5 136.5 L733.0 136.5 L734.5 136.5 L736.0 136.5 L737.5 136.5 L739.0 136.5 L740.5 136.5 L742.0 136.5 L743.5 136.5 L745.0 136.5 L746.5 136.5 L748.0 136.5 L749.5 136.5 L751.0 136.5 L752.5 136.5 L754.0 136.5 L755.5 136.5 L757.0 136.5 L758.5 136.5 L760.0 136.5 L761.5 136.5 L763.0 136.5 L764.5 136.5 L766.0 136.5 L767.5 136.5 L769.0 136.5 L770.5 136.5 L772.0 136.5 L773.5 136.5 L775.0 136.5 L776.5 136.5 L778.0 136.5 L779.5 136.5 L781.0 136.5 L782.5 136.5 L784.0 136.5 L785.5 136.5 L787.0 136.5 L788.5 136.5 L790.0 136.5 L791.5 136.5 L793.0 136.5 L794.5 136.5 L796.0 136.5 L797.5 136.5 L799.0 136.5 L800.5 136.5 L802.0 136.5 L803.5 136.5 L805.0 136.5 L806.5 136.5 L808.0 136.6 L809.6 136.8 L811.1 136.9 L812.6 137.2 L814.1 137.4 L815.6 137.9 L817.1 138.7 L818.6 140.2 L820.1 143.0 L821.6 147.7 L823.1 153.0 L824.6 158.3 L826.1 165.0 L827.6 174.0 L829.1 182.4 L830.6 196.0 L832.1 209.9 L833.6 219.9 L835.1 228.4 L836.6 236.1 L838.1 244.0 L839.6 252.6 L841.1 261.9 L842.6 271.2 L844.1 280.2 L845.6 288.4 L847.1 295.7 L848.6 302.4 L850.1 308.9 L851.6 315.2 L853.1 321.8 L854.6 328.9 L856.1 336.6 L857.6 344.6 L859.1 352.6 L860.6 360.3 L862.1 367.3 L863.6 373.5 L865.1 379.2 L866.6 384.6 L868.1 389.8 L869.6 394.9 L871.1 400.1 L872.6 405.4 L874.1 410.9 L875.6 416.5 L877.1 422.1 L878.6 427.8 L880.1 433.5 L881.6 439.2 L883.1 444.7 L884.6 450.0 L886.1 455.4 L887.6 460.5 L889.1 465.5 L890.7 470.5 L892.2 475.6 L893.7 480.5 L895.2 485.8 L896.7 490.9 L898.2 495.2 L899.7 500.5 L901.2 505.2 L902.7 509.9 L904.2 513.7 L905.7 518.1 L907.2 522.6 L908.7 527.0 L910.2 531.4 L911.7 536.5 L913.2 541.4 L914.7 545.7 L916.2 549.3 L917.7 553.9 L919.2 558.5 L920.7 561.1 L922.2 566.6 L923.7 571.3 L925.2 575.2 L926.7 579.2 L928.2 582.5 L929.7 585.6 L931.2 591.3 L932.5 593.7 L934.2 595.6 L935.7 601.7 L937.5 602.8 L938.8 608.8 L940.0 607.5 L941.7 616.2 L943.5 614.5 L945.1 625.2 L946.6 624.4 L947.8 634.5 L949.4 628.7 L951.2 640.9 L953.0 634.8 L954.3 647.5 L955.6 643.8 L957.0 653.8 L958.6 651.2 L960.5 663.5 L961.9 655.2 L963.7 672.3 L965.6 663.7 L967.1 681.6 L968.2 669.9 L969.5 682.8 L971.2 678.9 L972.7 697.7 L974.2 698.6 L975.7 711.9 L977.4 705.6 L978.9 717.5 L980.2 684.3 L981.6 711.8 L983.3 679.8 L984.7 710.7 L986.1 692.6 L987.8 714.0 L989.3 693.7 L991.1 709.0 L992.9 678.9 L994.1 711.8 L996.0 682.1 L997.1 717.5 L998.5 706.7 L999.7 717.5 L1001.3 683.9 L1003.1 717.5 L1004.8 687.9 L1005.9 705.3 L1007.8 702.0 L1009.0 716.0" fill="none" stroke="#00a3a6" stroke-width="1" stroke-linejoin="round" shape-rendering="crispEdges"/>
<path d="M87.0 717.0 L347.3 717.0 L348.5 657.6 L349.7 550.0 L350.9 448.0 L352.1 412.4 L353.3 397.6 L354.5 358.5 L355.7 336.3 L356.9 321.3 L358.1 309.2 L359.3 299.9 L360.5 293.5 L361.7 288.6 L362.9 284.6 L364.1 281.2 L365.3 278.0 L366.5 275.0 L367.7 272.4 L368.9 270.0 L370.1 267.4 L371.3 264.5 L372.5 261.3 L373.7 258.0 L374.9 254.9 L376.1 252.2 L377.3 250.1 L378.5 248.4 L379.7 246.7 L380.9 245.3 L382.2 243.9 L383.4 242.6 L384.6 241.4 L385.8 240.2 L387.0 239.1 L388.2 237.9 L389.4 236.7 L390.6 235.4 L391.8 234.0 L393.0 232.6 L394.2 231.2 L395.4 229.7 L396.6 228.2 L397.8 226.8 L399.0 225.4 L400.2 224.1 L401.4 222.9 L402.6 221.8 L403.8 220.9 L405.0 220.1 L406.2 219.5 L407.4 219.1 L408.6 218.8 L409.8 218.5 L411.0 218.2 L412.2 218.0 L413.4 217.8 L414.6 217.6 L415.8 217.4 L417.0 217.2 L418.2 217.1 L419.4 216.9 L420.6 216.8 L421.8 216.6 L423.0 216.4 L424.2 216.2 L425.4 216.0 L426.6 215.7 L427.8 215.4 L429.0 215.1 L430.2 214.7 L431.4 214.4 L432.6 214.0 L433.8 213.5 L435.0 213.1 L436.2 212.6 L437.4 212.1 L438.6 211.6 L439.8 211.1 L441.0 210.6 L442.2 210.0 L443.4 209.3 L444.6 208.5 L445.8 207.6 L447.0 206.6 L448.2 205.6 L449.5 204.5 L450.7 203.4 L451.9 202.4 L453.1 201.5 L454.3 200.7 L455.5 200.0 L456.7 199.6 L457.9 199.3 L459.1 199.0 L460.3 198.8 L461.5 198.6 L462.7 198.4 L463.9 198.3 L465.1 198.1 L466.3 198.0 L467.5 197.9 L468.7 197.7 L469.9 197.7 L471.1 197.6 L472.3 197.5 L473.5 197.4 L474.7 197.4 L475.9 197.3 L477.1 197.3 L478.3 197.3 L479.5 197.2 L480.7 197.2 L481.9 197.2 L483.1 197.2 L484.3 197.1 L485.5 197.1 L486.7 197.1 L487.9 197.1 L489.1 197.0 L490.3 197.0 L491.5 197.0 L492.7 196.9 L493.9 196.8 L495.1 196.8 L496.3 196.7 L497.5 196.5 L498.7 196.3 L499.9 196.0 L501.1 195.7 L502.3 195.4 L503.5 195.1 L504.7 194.8 L505.9 194.5 L507.1 194.2 L508.3 194.0 L509.5 193.8 L510.7 193.7 L511.9 193.6 L513.1 193.4 L514.3 193.3 L515.5 193.2 L516.8 193.1 L518.0 193.0 L519.2 192.9 L520.4 192.8 L521.6 192.7 L522.8 192.7 L524.0 192.6 L525.2 192.6 L526.4 192.6 L527.6 192.6 L528.8 192.6 L530.0 192.6 L531.2 192.7 L532.4 192.7 L533.6 192.7 L534.8 192.8 L536.0 192.8 L537.2 192.9 L538.4 192.9 L539.6 193.0 L540.8 193.1 L542.0 193.2 L543.2 193.4 L544.4 193.7 L545.6 194.0 L546.8 194.2 L548.0 194.6 L549.2 194.9 L550.4 195.2 L551.6 195.4 L552.8 195.7 L554.0 195.9 L555.2 196.1 L556.4 196.2 L557.6 196.4 L558.8 196.6 L560.0 196.7 L561.2 196.9 L562.4 197.0 L563.6 197.2 L564.8 197.3 L566.0 197.4 L567.2 197.4 L568.4 197.5 L569.6 197.5 L570.8 197.5 L572.0 197.5 L573.2 197.5 L574.4 197.4 L575.6 197.4 L576.8 197.3 L578.0 197.3 L579.2 197.2 L580.4 197.2 L581.6 197.1 L582.8 196.9 L584.1 196.8 L585.3 196.5 L586.5 196.3 L587.7 196.0 L588.9 195.8 L590.1 195.6 L591.3 195.3 L592.5 195.2 L593.7 195.0 L594.9 194.9 L596.1 194.9 L597.3 194.9 L598.5 194.9 L599.7 195.0 L600.9 195.1 L602.1 195.1 L603.3 195.2 L604.5 195.3 L605.7 195.4 L606.9 195.6 L608.1 195.7 L609.3 195.8 L610.5 196.0 L611.7 196.1 L612.9 196.3 L614.1 196.5 L615.3 196.7 L616.5 197.0 L617.7 197.2 L618.9 197.5 L620.1 197.9 L621.3 198.2 L622.5 198.5 L623.7 198.8 L624.9 199.2 L626.1 199.5 L627.3 199.8 L628.5 200.3 L629.7 200.7 L630.9 201.1 L632.1 201.6 L633.3 202.1 L634.5 202.5 L635.7 203.0 L636.9 203.4 L638.1 203.7 L639.3 204.0 L640.5 204.3 L641.7 204.4 L642.9 204.6 L644.1 204.8 L645.3 204.9 L646.5 205.0 L647.7 205.1 L648.9 205.2 L650.1 205.3 L651.4 205.4 L652.6 205.5 L653.8 205.6 L655.0 205.7 L656.2 205.8 L657.4 205.9 L658.6 206.0 L659.8 206.1 L661.0 206.1 L662.2 206.2 L663.4 206.3 L664.6 206.4 L665.8 206.4 L667.0 206.5 L668.2 206.6 L669.4 206.7 L670.6 206.9 L671.8 207.1 L673.0 207.3 L674.2 207.6 L675.4 208.0 L676.6 208.5 L677.8 209.0 L679.0 209.5 L680.2 210.0 L681.4 210.6 L682.6 211.1 L683.8 211.7 L685.0 212.2 L686.2 212.7 L687.4 213.1 L688.6 213.6 L689.8 214.1 L691.0 214.6 L692.2 215.1 L693.4 215.6 L694.6 216.1 L695.8 216.6 L697.0 217.1 L698.2 217.6 L699.4 218.1 L700.6 218.5 L701.8 219.0 L703.0 219.5 L704.2 220.0 L705.4 220.5 L706.6 220.9 L707.8 221.4 L709.0 221.8 L710.2 222.2 L711.4 222.5 L712.6 222.9 L713.8 223.3 L715.0 223.7 L716.2 224.1 L717.4 224.5 L718.7 224.9 L719.9 225.3 L721.1 225.8 L722.3 226.3 L723.5 226.8 L724.7 227.4 L725.9 228.0 L727.1 228.7 L728.3 229.6 L729.5 230.7 L730.7 231.9 L731.9 233.3 L733.1 234.8 L734.3 236.4 L735.5 238.0 L736.7 239.6 L737.9 241.2 L739.1 242.8 L740.3 244.3 L741.5 245.6 L742.7 246.8 L743.9 247.8 L745.1 248.7 L746.3 249.6 L747.5 250.3 L748.7 251.1 L749.9 251.8 L751.1 252.4 L752.3 253.1 L753.5 253.7 L754.7 254.4 L755.9 255.1 L757.1 255.8 L758.3 256.6 L759.5 257.4 L760.7 258.3 L761.9 259.2 L763.1 260.2 L764.3 261.2 L765.5 262.3 L766.7 263.4 L767.9 264.6 L769.1 265.9 L770.3 267.2 L771.5 268.6 L772.7 270.1 L773.9 271.8 L775.1 273.6 L776.3 275.7 L777.5 278.0 L778.7 280.4 L779.9 283.0 L781.1 285.7 L782.3 288.4 L783.5 291.3 L784.7 294.3 L786.0 297.7 L787.2 301.3 L788.4 304.8 L789.6 308.1 L790.8 311.1 L792.0 313.9 L793.2 316.5 L794.4 319.1 L795.6 321.8 L796.8 324.7 L798.0 327.9 L799.2 331.4 L800.4 335.4 L801.6 339.7 L802.8 344.5 L804.0 349.8 L805.2 355.7 L806.4 362.6 L807.6 370.8 L808.8 380.2 L810.0 390.9 L811.2 403.5 L812.4 419.2 L813.6 442.3 L814.8 470.5 L816.0 508.7 L817.2 576.0 L818.4 643.6 L819.6 717.0 L1009.0 717.0" fill="none" stroke="#de68fc" stroke-width="1" stroke-linejoin="round" shape-rendering="crispEdges"/>
<path d="M87.0 134.5 L88.0 134.5 L89.0 134.5 L90.0 134.5 L91.0 134.5 L92.0 134.5 L93.0 134.5 L94.0 134.5 L95.0 134.5 L96.0 134.5 L97.0 134.5 L98.0 134.5 L99.0 134.5 L100.0 134.5 L101.0 134.5 L102.0 134.5 L103.0 134.5 L104.0 134.5 L105.0 134.5 L106.0 134.5 L107.0 134.5 L108.0 134.5 L109.0 134.5 L110.0 134.5 L111.0 134.5 L112.0 134.5 L113.0 134.5 L114.1 134.5 L115.1 134.5 L116.1 134.5 L117.1 134.5 L118.1 134.5 L119.1 134.5 L120.1 134.5 L121.1 134.5 L122.1 134.5 L123.1 134.5 L124.1 134.5 L125.1 134.5 L126.1 134.5 L127.1 134.5 L128.1 134.5 L129.1 134.5 L130.1 134.5 L131.1 134.5 L132.1 134.5 L133.1 134.5 L134.1 134.5 L135.1 134.5 L136.1 134.5 L137.1 134.5 L138.1 134.5 L139.1 134.5 L140.1 134.5 L141.1 134.5 L142.1 134.5 L143.1 134.5 L144.1 134.5 L145.1 134.5 L146.1 134.5 L147.1 134.5 L148.1 134.5 L149.1 134.5 L150.1 134.5 L151.1 134.5 L152.1 134.5 L153.1 134.5 L154.1 134.5 L155.1 134.5 L156.1 134.5 L157.1 134.5 L158.1 134.5 L159.1 134.5 L160.1 134.5 L161.1 134.5 L162.1 134.5 L163.1 134.5 L164.1 134.5 L165.1 134.5 L166.1 134.5 L167.1 134.5 L168.2 134.5 L169.2 134.5 L170.2 134.5 L171.2 134.5 L172.2 134.5 L173.2 134.5 L174.2 134.5 L175.2 134.5 L176.2 134.5 L177.2 134.5 L178.2 134.5 L179.2 134.5 L180.2 134.5 L181.2 134.5 L182.2 134.5 L183.2 134.5 L184.2 134.5 L185.2 134.5 L186.2 134.5 L187.2 134.5 L188.2 134.5 L189.2 134.5 L190.2 134.5 L191.2 134.5 L192.2 134.5 L193.2 134.5 L194.2 134.5 L195.2 134.5 L196.2 134.5 L197.2 134.5 L198.2 134.5 L199.2 134.5 L200.2 134.5 L201.2 134.5 L202.2 134.5 L203.2 134.5 L204.2 134.5 L205.2 134.5 L206.2 134.5 L207.2 134.5 L208.2 134.5 L209.2 134.5 L210.2 134.5 L211.2 134.5 L212.2 134.5 L213.2 134.5 L214.2 134.5 L215.2 134.5 L216.2 134.5 L217.2 134.5 L218.2 134.5 L219.2 134.5 L220.2 134.5 L221.3 134.5 L222.3 134.5 L223.3 134.5 L224.3 134.5 L225.3 134.5 L226.3 134.5 L227.3 134.5 L228.3 134.5 L229.3 134.5 L230.3 134.5 L231.3 134.5 L232.3 134.5 L233.3 134.5 L234.3 134.5 L235.3 134.5 L236.3 134.5 L237.3 134.5 L238.3 134.5 L239.3 134.5 L240.3 134.5 L241.3 134.5 L242.3 134.5 L243.3 134.5 L244.3 134.5 L245.3 134.5 L246.3 134.5 L247.3 134.5 L248.3 134.5 L249.3 134.5 L250.3 134.5 L251.3 134.5 L252.3 134.5 L253.3 134.5 L254.3 134.5 L255.3 134.5 L256.3 134.5 L257.3 134.5 L258.3 134.5 L259.3 134.5 L260.3 134.5 L261.3 134.5 L262.3 134.5 L263.3 134.5 L264.3 134.5 L265.3 134.5 L266.3 134.5 L267.3 134.5 L268.3 134.5 L269.3 134.5 L270.3 134.5 L271.3 134.5 L272.3 134.5 L273.3 134.5 L274.4 134.5 L275.4 134.5 L276.4 134.5 L277.4 134.6 L278.4 134.6 L279.4 134.6 L280.4 134.6 L281.4 134.6 L282.4 134.6 L283.4 134.6 L284.4 134.6 L285.4 134.6 L286.4 134.6 L287.4 134.6 L288.4 134.6 L289.4 134.6 L290.4 134.6 L291.4 134.6 L292.4 134.6 L293.4 134.6 L294.4 134.6 L295.4 134.6 L296.4 134.6 L297.4 134.6 L298.4 134.6 L299.4 134.6 L300.4 134.6 L301.4 134.6 L302.4 134.7 L303.4 134.7 L304.4 134.8 L305.4 134.9 L306.4 135.0 L307.4 135.1 L308.4 135.2 L309.4 135.3 L310.4 135.4 L311.4 135.5 L312.4 135.7 L313.4 135.8 L314.4 135.9 L315.4 136.1 L316.4 136.3 L317.4 136.5 L318.4 136.7 L319.4 136.9 L320.4 137.1 L321.4 137.3 L322.4 137.5 L323.4 137.8 L324.4 138.1 L325.4 138.4 L326.4 138.8 L327.4 139.3 L328.5 139.9 L329.5 140.6 L330.5 141.5 L331.5 142.4 L332.5 143.5 L333.5 144.6 L334.5 145.9 L335.5 147.5 L336.5 149.8 L337.5 153.4 L338.5 157.9 L339.5 162.3 L340.5 166.5 L341.5 171.3 L342.5 177.5 L343.5 184.7 L344.5 192.1 L345.5 202.4 L346.5 215.5 L347.5 230.6 L348.5 246.6 L349.5 263.1 L350.5 281.2 L351.5 302.4 L352.5 330.1 L353.5 368.2 L354.5 400.0 L355.1 422.7 L355.8 445.3 L356.4 468.0 L357.1 490.7 L357.8 513.3 L358.4 536.0 L358.7 528.9 L358.9 522.2 L359.2 515.7 L359.4 509.4 L359.7 503.5 L360.0 497.8 L360.2 492.4 L360.5 487.3 L360.8 482.5 L361.0 478.0 L361.3 473.8 L361.5 469.8 L361.8 466.2 L362.1 462.8 L362.3 459.7 L362.6 456.9 L362.9 454.5 L363.1 452.3 L363.4 450.4 L363.6 448.9 L363.9 447.7 L364.2 446.8 L364.4 446.2 L364.7 446.0 L365.1 446.4 L365.4 447.0 L365.8 448.0 L366.2 449.1 L366.5 450.4 L366.9 451.9 L367.3 453.5 L367.6 455.2 L368.0 457.1 L368.4 459.1 L368.7 461.2 L369.1 463.5 L369.5 465.8 L369.8 468.3 L370.2 470.8 L370.6 473.5 L370.9 476.2 L371.3 479.1 L371.7 482.0 L372.0 485.0 L372.4 488.2 L372.8 491.3 L373.1 494.6 L373.5 498.0 L374.2 494.2 L374.8 490.4 L375.5 486.8 L376.1 483.3 L376.8 479.9 L377.4 476.6 L378.1 473.4 L378.7 470.3 L379.4 467.4 L380.0 464.5 L380.7 461.8 L381.4 459.3 L382.0 456.8 L382.7 454.5 L383.3 452.3 L384.0 450.3 L384.6 448.4 L385.3 446.7 L385.9 445.1 L386.6 443.7 L387.2 442.6 L387.9 441.6 L388.5 440.9 L389.2 440.6 L390.0 440.6 L390.9 440.6 L391.7 440.8 L392.5 441.0 L393.4 441.6 L394.2 442.5 L395.0 443.9 L395.9 445.9 L396.7 448.7 L397.5 452.4 L398.4 457.3 L399.2 463.4 L400.0 471.0 L400.9 480.3 L401.7 491.5 L402.5 504.8 L403.4 520.5 L404.2 538.7 L405.0 559.8 L405.9 584.0 L406.7 611.5 L407.5 642.7 L408.4 677.7 L409.2 717.0 L410.3 675.0 L411.4 637.4 L412.5 604.0 L413.6 574.5 L414.6 548.7 L415.7 526.1 L416.8 506.5 L417.9 489.8 L419.0 475.5 L420.1 463.5 L421.2 453.6 L422.2 445.4 L423.3 438.8 L424.4 433.7 L425.5 429.7 L426.6 426.7 L427.7 424.5 L428.8 423.0 L429.9 422.0 L430.9 421.5 L432.0 421.2 L433.1 421.0 L434.2 421.0 L435.3 421.0 L436.5 421.1 L437.8 421.5 L439.0 422.2 L440.2 423.3 L441.5 424.8 L442.7 426.6 L444.0 429.0 L445.2 431.7 L446.4 434.9 L447.7 438.6 L448.9 442.8 L450.1 447.5 L451.4 452.7 L452.6 458.4 L453.9 464.6 L455.1 471.3 L456.3 478.6 L457.6 486.4 L458.8 494.8 L460.1 503.8 L461.3 513.3 L462.5 523.4 L463.8 534.0 L465.0 545.3 L466.2 539.0 L467.3 533.0 L468.5 527.2 L469.7 521.6 L470.9 516.2 L472.0 511.1 L473.2 506.2 L474.4 501.6 L475.5 497.2 L476.7 493.0 L477.9 489.1 L479.1 485.4 L480.2 482.0 L481.4 478.9 L482.6 476.0 L483.7 473.3 L484.9 470.9 L486.1 468.8 L487.2 467.0 L488.4 465.5 L489.6 464.3 L490.8 463.3 L491.9 462.7 L493.1 462.5 L494.4 462.5 L495.7 462.7 L497.0 463.0 L498.3 463.7 L499.6 464.8 L500.9 466.3 L502.2 468.4 L503.5 471.1 L504.8 474.4 L506.1 478.6 L507.4 483.5 L508.8 489.3 L510.1 496.1 L511.4 503.9 L512.7 512.7 L514.0 522.7 L515.3 533.9 L516.6 546.4 L517.9 560.1 L519.2 575.3 L520.5 591.9 L521.8 609.9 L523.1 629.6 L524.4 650.8 L526.1 625.8 L527.7 602.9 L529.4 582.0 L531.1 563.0 L532.8 545.8 L534.4 530.3 L536.1 516.4 L537.8 504.1 L539.4 493.2 L541.1 483.7 L542.8 475.4 L544.5 468.3 L546.1 462.3 L547.8 457.3 L549.5 453.2 L551.1 450.0 L552.8 447.4 L554.5 445.5 L556.1 444.1 L557.8 443.2 L559.5 442.6 L561.2 442.3 L562.8 442.2 L564.5 442.2 L566.2 442.2 L567.9 442.2 L569.6 442.4 L571.3 442.6 L573.0 443.2 L574.7 444.1 L576.4 445.5 L578.1 447.5 L579.8 450.3 L581.5 454.0 L583.2 458.8 L584.9 464.9 L586.5 472.5 L588.2 481.7 L589.9 492.8 L591.6 506.1 L593.3 521.7 L595.0 539.8 L596.7 560.8 L598.4 584.8 L600.1 612.2 L601.8 643.1 L603.5 678.0 L605.2 717.0 L606.7 679.1 L608.3 645.1 L609.8 614.9 L611.3 588.2 L612.8 564.6 L614.4 544.0 L615.9 526.2 L617.4 510.8 L619.0 497.7 L620.5 486.6 L622.0 477.4 L623.5 469.9 L625.1 463.8 L626.6 458.9 L628.1 455.2 L629.7 452.3 L631.2 450.3 L632.7 448.9 L634.3 447.9 L635.8 447.4 L637.3 447.1 L638.8 446.9 L640.4 446.9 L641.9 446.9 L643.3 446.9 L644.7 447.0 L646.1 447.1 L647.5 447.5 L648.8 448.1 L650.2 449.1 L651.6 450.7 L653.0 452.9 L654.4 455.8 L655.8 459.7 L657.2 464.6 L658.5 470.7 L659.9 478.3 L661.3 487.3 L662.7 498.0 L664.1 510.7 L665.5 525.4 L666.9 542.3 L668.3 561.7 L669.7 583.7 L671.0 608.5 L672.4 636.4 L673.8 667.5 L675.2 702.0 L676.4 667.5 L677.7 636.5 L678.9 608.7 L680.2 583.9 L681.4 561.9 L682.7 542.6 L683.9 525.6 L685.1 511.0 L686.4 498.4 L687.6 487.6 L688.9 478.6 L690.1 471.1 L691.3 464.9 L692.6 460.0 L693.8 456.1 L695.1 453.2 L696.3 451.0 L697.5 449.4 L698.8 448.4 L700.0 447.8 L701.3 447.4 L702.5 447.3 L703.8 447.2 L705.0 447.2 L706.0 447.4 L707.0 448.1 L708.0 449.2 L709.1 450.6 L710.1 452.5 L711.1 454.6 L712.1 457.0 L713.1 459.6 L714.1 462.3 L715.1 465.1 L716.2 468.0 L717.2 470.7 L718.2 473.3 L719.2 475.7 L720.2 477.8 L721.2 479.7 L722.3 481.1 L723.3 482.2 L724.3 482.9 L725.3 483.1 L726.5 482.7 L727.6 481.6 L728.8 479.7 L730.0 477.1 L731.2 473.8 L732.3 470.1 L733.5 465.8 L734.7 461.2 L735.9 456.4 L737.0 451.5 L738.2 446.5 L739.4 441.7 L740.5 437.1 L741.7 432.8 L742.9 429.1 L744.1 425.8 L745.2 423.2 L746.4 421.3 L747.6 420.2 L748.8 419.8 L749.6 419.8 L750.5 420.0 L751.3 420.4 L752.2 421.2 L753.1 422.4 L753.9 424.0 L754.8 426.1 L755.7 428.9 L756.5 432.3 L757.4 436.4 L758.3 441.2 L759.1 446.9 L760.0 453.4 L760.9 460.9 L761.7 469.3 L762.6 478.7 L763.4 489.1 L764.3 500.7 L765.2 513.4 L766.0 527.3 L766.9 542.4 L767.8 558.8 L768.6 576.5 L769.5 595.6 L770.2 577.3 L770.9 560.3 L771.6 544.5 L772.3 529.9 L773.0 516.5 L773.7 504.2 L774.4 493.0 L775.1 482.8 L775.8 473.6 L776.5 465.4 L777.2 458.1 L777.9 451.7 L778.6 446.1 L779.3 441.2 L780.0 437.2 L780.7 433.8 L781.4 431.0 L782.1 428.8 L782.8 427.2 L783.5 426.0 L784.2 425.2 L784.9 424.7 L785.6 424.5 L786.2 424.5 L786.8 424.5 L787.4 424.7 L787.9 425.1 L788.5 425.8 L789.0 426.9 L789.6 428.5 L790.1 430.6 L790.7 433.3 L791.2 436.7 L791.8 440.8 L792.3 445.7 L792.9 451.4 L793.4 458.1 L794.0 465.8 L794.5 474.4 L795.1 484.2 L795.6 495.1 L796.2 507.2 L796.7 520.5 L797.3 535.2 L797.8 551.2 L798.4 568.6 L798.9 587.4 L799.5 607.8 L799.8 592.1 L800.1 577.5 L800.5 563.8 L800.8 551.0 L801.1 539.2 L801.5 528.3 L801.8 518.2 L802.1 509.0 L802.4 500.6 L802.8 493.1 L803.1 486.3 L803.4 480.2 L803.7 474.9 L804.0 470.2 L804.4 466.2 L804.7 462.9 L805.0 460.0 L805.3 457.8 L805.7 456.0 L806.0 454.7 L806.3 453.8 L806.6 453.3 L807.0 453.1 L807.3 453.0 L807.5 453.1 L807.7 453.3 L807.9 453.9 L808.0 454.8 L808.2 456.1 L808.4 457.9 L808.6 460.2 L808.8 463.0 L809.0 466.4 L809.2 470.3 L809.4 474.9 L809.5 480.2 L809.7 486.2 L809.9 492.8 L810.1 500.2 L810.3 508.4 L810.5 517.4 L810.7 527.1 L810.9 537.7 L811.0 549.2 L811.2 561.5 L811.4 574.8 L811.6 588.9 L811.8 604.0 L812.8 541.1 L813.8 482.8 L814.8 429.3 L815.8 379.3 L816.8 332.4 L817.8 294.8 L818.8 267.7 L819.8 245.3 L820.8 226.4 L821.8 209.7 L822.8 195.2 L823.8 184.2 L824.8 176.2 L825.8 166.7 L826.8 159.0 L827.8 153.5 L828.8 149.1 L829.8 146.9 L830.8 145.4 L831.8 144.2 L832.8 143.2 L833.8 142.2 L834.8 141.4 L835.8 140.6 L836.8 140.0 L837.8 139.5 L838.8 139.2 L839.8 138.8 L840.8 138.5 L841.8 138.2 L842.8 138.0 L843.8 137.8 L844.8 137.6 L845.8 137.4 L846.8 137.3 L847.8 137.2 L848.8 137.1 L849.8 137.0 L850.8 136.9 L851.8 136.8 L852.8 136.7 L853.8 136.6 L854.8 136.5 L855.8 136.4 L856.8 136.4 L857.8 136.3 L858.8 136.2 L859.8 136.1 L860.8 136.0 L861.9 136.0 L862.9 135.9 L863.9 135.8 L864.9 135.8 L865.9 135.7 L866.9 135.7 L867.9 135.6 L868.9 135.6 L869.9 135.5 L870.9 135.5 L871.9 135.5 L872.9 135.4 L873.9 135.4 L874.9 135.3 L875.9 135.3 L876.9 135.3 L877.9 135.2 L878.9 135.2 L879.9 135.2 L880.9 135.1 L881.9 135.1 L882.9 135.1 L883.9 135.0 L884.9 135.0 L885.9 135.0 L886.9 134.9 L887.9 134.9 L888.9 134.9 L889.9 134.9 L890.9 134.8 L891.9 134.8 L892.9 134.8 L893.9 134.8 L894.9 134.7 L895.9 134.7 L896.9 134.7 L897.9 134.7 L898.9 134.6 L899.9 134.6 L900.9 134.6 L901.9 134.6 L902.9 134.6 L903.9 134.6 L904.9 134.6 L905.9 134.5 L906.9 134.5 L907.9 134.5 L908.9 134.5 L909.9 134.5 L910.9 134.5 L911.9 134.5 L912.9 134.5 L913.9 134.5 L914.9 134.5 L915.9 134.5 L916.9 134.5 L917.9 134.5 L918.9 134.5 L919.9 134.5 L920.9 134.5 L921.9 134.5 L922.9 134.5 L923.9 134.5 L924.9 134.5 L925.9 134.5 L926.9 134.5 L927.9 134.5 L928.9 134.5 L929.9 134.5 L930.9 134.5 L931.9 134.5 L932.9 134.5 L933.9 134.5 L934.9 134.5 L935.9 134.5 L936.9 134.5 L937.9 134.5 L938.9 134.5 L939.9 134.5 L940.9 134.5 L941.9 134.5 L942.9 134.5 L943.9 134.5 L944.9 134.5 L945.9 134.5 L946.9 134.5 L947.9 134.5 L948.9 134.5 L949.9 134.5 L950.9 134.5 L951.9 134.5 L952.9 134.5 L953.9 134.5 L954.9 134.5 L955.9 134.5 L956.9 134.5 L957.9 134.5 L958.9 134.5 L960.0 134.5 L961.0 134.5 L962.0 134.5 L963.0 134.5 L964.0 134.5 L965.0 134.5 L966.0 134.5 L967.0 134.5 L968.0 134.5 L969.0 134.5 L970.0 134.5 L971.0 134.5 L972.0 134.5 L973.0 134.5 L974.0 134.5 L975.0 134.5 L976.0 134.5 L977.0 134.5 L978.0 134.5 L979.0 134.5 L980.0 134.5 L981.0 134.5 L982.0 134.5 L983.0 134.5 L984.0 134.5 L985.0 134.5 L986.0 134.5 L987.0 134.5 L988.0 134.5 L989.0 134.5 L990.0 134.5 L991.0 134.5 L992.0 134.5 L993.0 134.5 L994.0 134.5 L995.0 134.5 L996.0 134.5 L997.0 134.5 L998.0 134.5 L999.0 134.5 L1000.0 134.5 L1001.0 134.5 L1002.0 134.5 L1003.0 134.5 L1004.0 134.5 L1005.0 134.5 L1006.0 134.5 L1007.0 134.5 L1008.0 134.5 L1009.0 134.5" fill="none" stroke="#34f42c" stroke-width="1" stroke-linejoin="round" shape-rendering="crispEdges"/>
<path d="M87.5 135.5 H162 M292 135.5 H305 M913 134.5 H926" stroke="#9c6000" stroke-width="1" fill="none" shape-rendering="crispEdges"/><path d="M326.4 138.8 L327.4 139.3 L328.5 139.9 L329.5 140.6 L330.5 141.5 L331.5 142.4 L332.5 143.5 L333.5 144.6 L334.5 145.9 L335.5 147.5 L336.5 149.8 L337.5 153.4 L338.5 157.9 L339.5 162.3 L340.5 166.5 L341.5 171.3 L342.5 177.5 L343.5 184.7 L344.5 192.1 L345.5 202.4 L346.5 215.5 L347.5 230.6 L348.5 246.6 L349.5 263.1 L350.5 281.2 L351.5 302.4 L352.5 330.1 L353.5 368.2 L354.5 400.0 L355.0 436.6 L355.5 473.2 L356.0 509.8 L356.5 546.3 L357.0 582.9 L357.5 619.5 L357.8 601.9 L358.1 585.4 L358.4 570.1 L358.7 556.0 L359.0 543.0 L359.3 531.0 L359.6 520.0 L359.9 510.1 L360.2 501.1 L360.5 493.0 L360.8 485.8 L361.1 479.5 L361.4 474.0 L361.7 469.2 L362.0 465.1 L362.3 461.7 L362.6 458.9 L362.9 456.7 L363.2 455.0 L363.5 453.8 L363.8 453.0 L364.1 452.5 L364.4 452.3 L364.7 452.3 L365.1 452.4 L365.5 452.9 L365.9 453.6 L366.4 454.8 L366.8 456.3 L367.2 458.2 L367.6 460.5 L368.0 463.2 L368.4 466.3 L368.9 469.9 L369.3 473.9 L369.7 478.3 L370.1 483.1 L370.5 488.4 L370.9 494.2 L371.4 500.4 L371.8 507.1 L372.2 514.2 L372.6 521.8 L373.0 529.9 L373.4 538.5 L373.9 547.5 L374.3 557.0 L374.7 567.0 L375.3 555.8 L376.0 545.2 L376.6 535.1 L377.2 525.6 L377.9 516.7 L378.5 508.3 L379.2 500.5 L379.8 493.3 L380.4 486.5 L381.1 480.3 L381.7 474.6 L382.4 469.5 L383.0 464.8 L383.6 460.6 L384.3 457.0 L384.9 453.7 L385.5 451.0 L386.2 448.7 L386.8 446.8 L387.4 445.3 L388.1 444.2 L388.7 443.5 L389.4 443.1 L390.0 443.0 L390.8 443.0 L391.6 443.2 L392.3 443.7 L393.1 444.4 L393.9 445.6 L394.7 447.3 L395.5 449.4 L396.2 452.2 L397.0 455.6 L397.8 459.7 L398.6 464.5 L399.4 470.1 L400.2 476.6 L400.9 483.9 L401.7 492.2 L402.5 501.5 L403.3 511.8 L404.1 523.1 L404.8 535.5 L405.6 549.1 L406.4 563.9 L407.2 579.8 L408.0 597.1 L408.8 615.6 L409.9 593.1 L411.0 572.4 L412.1 553.3 L413.2 535.9 L414.3 520.1 L415.4 505.7 L416.5 492.8 L417.6 481.2 L418.7 470.9 L419.8 461.8 L420.9 453.8 L422.0 446.9 L423.1 441.0 L424.2 436.1 L425.3 431.9 L426.4 428.6 L427.6 425.9 L428.7 423.9 L429.8 422.4 L430.9 421.4 L432.0 420.8 L433.1 420.5 L434.2 420.3 L435.3 420.3 L436.6 420.4 L437.9 420.6 L439.2 421.1 L440.5 422.0 L441.8 423.3 L443.1 425.0 L444.4 427.3 L445.7 430.0 L447.0 433.4 L448.3 437.5 L449.6 442.1 L451.0 447.5 L452.3 453.7 L453.6 460.5 L454.9 468.2 L456.2 476.8 L457.5 486.1 L458.8 496.4 L460.1 507.6 L461.4 519.7 L462.7 532.7 L464.0 546.8 L465.3 561.9 L466.6 578.0 L467.7 568.4 L468.9 559.2 L470.0 550.5 L471.2 542.3 L472.3 534.5 L473.4 527.1 L474.6 520.2 L475.7 513.7 L476.8 507.7 L478.0 502.1 L479.1 496.9 L480.2 492.2 L481.4 487.8 L482.5 483.9 L483.7 480.4 L484.8 477.3 L485.9 474.6 L487.1 472.4 L488.2 470.4 L489.3 468.9 L490.5 467.8 L491.6 467.0 L492.8 466.5 L493.9 466.4 L495.2 466.4 L496.5 466.7 L497.9 467.2 L499.2 468.0 L500.5 469.3 L501.8 471.0 L503.1 473.2 L504.5 476.0 L505.8 479.4 L507.1 483.5 L508.4 488.2 L509.8 493.6 L511.1 499.8 L512.4 506.8 L513.7 514.6 L515.0 523.3 L516.4 532.9 L517.7 543.4 L519.0 554.8 L520.3 567.2 L521.6 580.7 L523.0 595.1 L524.3 610.7 L525.6 627.3 L527.3 606.3 L528.9 587.0 L530.6 569.1 L532.2 552.7 L533.9 537.7 L535.5 524.1 L537.2 511.8 L538.8 500.7 L540.5 490.7 L542.1 481.9 L543.8 474.2 L545.5 467.5 L547.1 461.7 L548.8 456.7 L550.4 452.6 L552.1 449.2 L553.7 446.5 L555.4 444.5 L557.0 442.9 L558.7 441.8 L560.3 441.2 L562.0 440.8 L563.6 440.6 L565.3 440.6 L567.0 440.6 L568.7 440.7 L570.4 440.9 L572.1 441.4 L573.9 442.3 L575.6 443.6 L577.3 445.4 L579.0 447.9 L580.7 451.1 L582.4 455.2 L584.1 460.2 L585.8 466.2 L587.6 473.5 L589.3 482.0 L591.0 491.9 L592.7 503.2 L594.4 516.2 L596.1 530.8 L597.8 547.3 L599.5 565.8 L601.3 586.2 L603.0 608.8 L604.7 633.7 L606.4 661.0 L607.9 635.0 L609.4 611.1 L610.8 589.4 L612.3 569.8 L613.8 552.0 L615.3 536.0 L616.8 521.8 L618.2 509.2 L619.7 498.0 L621.2 488.3 L622.7 480.0 L624.1 472.8 L625.6 466.8 L627.1 461.8 L628.6 457.7 L630.1 454.4 L631.5 451.9 L633.0 450.0 L634.5 448.7 L636.0 447.8 L637.5 447.3 L638.9 447.0 L640.4 446.9 L641.9 446.9 L643.3 446.9 L644.7 446.9 L646.1 447.1 L647.5 447.4 L649.0 447.9 L650.4 448.9 L651.8 450.3 L653.2 452.3 L654.6 455.2 L656.0 458.9 L657.4 463.8 L658.8 469.9 L660.3 477.4 L661.7 486.6 L663.1 497.7 L664.5 510.8 L665.9 526.2 L667.3 544.0 L668.7 564.6 L670.1 588.2 L671.6 614.9 L673.0 645.1 L674.4 679.1 L675.8 717.0 L677.0 680.5 L678.2 647.7 L679.4 618.4 L680.7 592.5 L681.9 569.5 L683.1 549.5 L684.3 532.0 L685.5 516.9 L686.8 504.0 L688.0 493.0 L689.2 483.9 L690.4 476.3 L691.6 470.2 L692.8 465.3 L694.0 461.5 L695.3 458.6 L696.5 456.5 L697.7 455.1 L698.9 454.1 L700.1 453.5 L701.4 453.2 L702.6 453.0 L703.8 453.0 L705.0 453.0 L705.9 453.1 L706.8 453.5 L707.7 454.2 L708.6 455.1 L709.5 456.1 L710.4 457.4 L711.3 458.9 L712.2 460.4 L713.1 462.1 L714.0 463.8 L714.9 465.4 L715.8 467.1 L716.7 468.6 L717.6 470.1 L718.5 471.4 L719.4 472.4 L720.3 473.3 L721.2 474.0 L722.1 474.4 L723.0 474.5 L724.3 474.1 L725.6 473.0 L726.9 471.3 L728.1 468.8 L729.4 465.8 L730.7 462.3 L732.0 458.3 L733.3 454.0 L734.6 449.5 L735.9 444.9 L737.2 440.2 L738.5 435.7 L739.7 431.4 L741.0 427.4 L742.3 423.9 L743.6 420.9 L744.9 418.4 L746.2 416.7 L747.5 415.6 L748.8 415.2 L749.6 415.3 L750.5 415.5 L751.3 416.1 L752.2 417.1 L753.1 418.4 L753.9 420.2 L754.8 422.5 L755.7 425.3 L756.5 428.7 L757.4 432.6 L758.3 437.2 L759.1 442.4 L760.0 448.2 L760.9 454.8 L761.7 462.0 L762.6 470.0 L763.4 478.8 L764.3 488.3 L765.2 498.6 L766.0 509.8 L766.9 521.7 L767.8 534.5 L768.6 548.2 L769.5 562.8 L770.2 549.1 L770.9 536.3 L771.6 524.2 L772.3 512.9 L773.0 502.4 L773.7 492.6 L774.4 483.5 L775.1 475.2 L775.8 467.5 L776.5 460.5 L777.2 454.2 L777.9 448.5 L778.6 443.4 L779.3 438.9 L780.0 435.0 L780.7 431.7 L781.4 428.9 L782.1 426.6 L782.8 424.8 L783.5 423.4 L784.2 422.4 L784.9 421.8 L785.6 421.5 L786.2 421.4 L786.8 421.4 L787.4 421.7 L787.9 422.1 L788.5 422.9 L789.0 424.2 L789.6 425.8 L790.1 428.1 L790.7 430.8 L791.2 434.2 L791.8 438.3 L792.3 443.1 L792.9 448.6 L793.4 454.9 L794.0 462.1 L794.5 470.1 L795.1 479.1 L795.6 489.0 L796.2 499.9 L796.7 511.8 L797.3 524.7 L797.8 538.8 L798.4 554.0 L798.9 570.3 L799.5 587.8 L799.8 575.5 L800.1 563.9 L800.5 552.9 L800.8 542.6 L801.1 532.9 L801.5 523.9 L801.8 515.5 L802.1 507.7 L802.4 500.6 L802.8 494.0 L803.1 488.0 L803.4 482.6 L803.7 477.7 L804.0 473.4 L804.4 469.6 L804.7 466.3 L805.0 463.6 L805.3 461.2 L805.7 459.4 L806.0 457.9 L806.3 456.9 L806.6 456.2 L807.0 455.9 L807.3 455.8 L807.5 455.8 L807.7 456.1 L807.9 456.6 L808.2 457.4 L808.4 458.6 L808.6 460.3 L808.8 462.6 L809.0 465.4 L809.2 468.8 L809.5 472.8 L809.7 477.5 L809.9 483.0 L810.1 489.3 L810.3 496.3 L810.5 504.2 L810.8 513.0 L811.0 522.7 L811.2 533.3 L811.4 545.0 L811.6 557.6 L811.9 571.2 L812.1 586.0 L812.3 601.8 L812.5 618.8 L813.5 527.4 L814.5 450.3 L815.5 391.5 L816.5 343.0 L817.5 304.2 L818.5 275.0 L819.5 251.4 L820.5 231.6 L821.5 214.3 L822.5 199.1 L823.5 186.9 L824.5 178.5 L825.5 169.5 L826.5 160.8 L827.5 155.0 L828.5 150.1 L829.5 147.4 L830.5 145.8 L831.5 144.5 L832.6 143.4 L833.6 142.5 L834.6 141.6 L835.6 140.8" fill="none" stroke="#9c6000" stroke-width="1" stroke-linejoin="round" shape-rendering="crispEdges" stroke-dasharray="5 7"/>
<path d="M579.9 456.2 L570.6 471.8 H589.2 Z" fill="none" stroke="#9c6000" stroke-width="1.1"/><text x="579.9" y="494.7" fill="#9c6000" text-anchor="middle">1</text><path d="M370.4 499.1 L361.1 514.7 H379.7 Z" fill="none" stroke="#9c6000" stroke-width="1.1"/><text x="370.4" y="532.7" fill="#9c6000" text-anchor="middle">2</text><path d="M789.5 426.0 L780.2 441.6 H798.8 Z" fill="none" stroke="#9c6000" stroke-width="1.1"/><text x="789.5" y="461.8" fill="#9c6000" text-anchor="middle">3</text><path d="M749.2 415.1 L739.9 399.5 H758.5 Z" fill="none" stroke="#9c6000" stroke-width="1.1"/><text x="749.2" y="395.1" fill="#9c6000" text-anchor="middle">8</text><path d="M579.9 135.3 L570.6 150.9 H589.2 Z" fill="none" stroke="#00a3a6" stroke-width="1.1"/><text x="579.9" y="169.4" fill="#00a3a6" text-anchor="middle">1</text><path d="M370.4 136.0 L361.1 151.6 H379.7 Z" fill="none" stroke="#00a3a6" stroke-width="1.1"/><text x="370.4" y="171.0" fill="#00a3a6" text-anchor="middle">2</text><path d="M789.5 136.5 L780.2 152.1 H798.8 Z" fill="none" stroke="#00a3a6" stroke-width="1.1"/><text x="789.5" y="172.3" fill="#00a3a6" text-anchor="middle">3</text><path d="M139.9 696.5 L130.6 712.1 H149.2 Z" fill="none" stroke="#00a3a6" stroke-width="1.1"/><text x="139.9" y="732.3" fill="#00a3a6" text-anchor="middle">4</text><path d="M286.6 375.7 L277.3 391.3 H295.9 Z" fill="none" stroke="#00a3a6" stroke-width="1.1"/><text x="286.6" y="411.5" fill="#00a3a6" text-anchor="middle">5</text><path d="M873.3 406.6 L864.0 422.2 H882.6 Z" fill="none" stroke="#00a3a6" stroke-width="1.1"/><text x="873.3" y="442.4" fill="#00a3a6" text-anchor="middle">6</text><path d="M957.1 654.4 L947.8 638.8 H966.4 Z" fill="none" stroke="#00a3a6" stroke-width="1.1"/><text x="957.1" y="633.4" fill="#00a3a6" text-anchor="middle">7</text><path d="M579.9 197.2 L570.6 212.8 H589.2 Z" fill="none" stroke="#de68fc" stroke-width="1.1"/><text x="579.9" y="232.2" fill="#de68fc" text-anchor="middle">1</text><path d="M370.4 266.2 L361.1 281.8 H379.7 Z" fill="none" stroke="#de68fc" stroke-width="1.1"/><text x="370.4" y="302.0" fill="#de68fc" text-anchor="middle">2</text><path d="M789.5 308.7 L780.2 324.3 H798.8 Z" fill="none" stroke="#de68fc" stroke-width="1.1"/><text x="789.5" y="344.5" fill="#de68fc" text-anchor="middle">3</text><path d="M526.7 191.9 L517.4 176.3 H536.0 Z" fill="none" stroke="#de68fc" stroke-width="1.1"/><text x="526.7" y="171.9" fill="#de68fc" text-anchor="middle">8</text><path d="M579.9 460.0 L570.6 475.6 H589.2 Z" fill="none" stroke="#34f42c" stroke-width="1.1"/><text x="579.9" y="495.8" fill="#34f42c" text-anchor="middle">1</text><path d="M370.4 474.2 L361.1 489.8 H379.7 Z" fill="none" stroke="#34f42c" stroke-width="1.1"/><text x="370.4" y="510.0" fill="#34f42c" text-anchor="middle">2</text><path d="M789.5 428.5 L780.2 444.1 H798.8 Z" fill="none" stroke="#34f42c" stroke-width="1.1"/><text x="789.5" y="464.3" fill="#34f42c" text-anchor="middle">3</text><path d="M749.2 420.5 L739.9 404.9 H758.5 Z" fill="none" stroke="#34f42c" stroke-width="1.1"/><text x="749.2" y="400.5" fill="#34f42c" text-anchor="middle">8</text>
<text x="425.2" y="357.3" fill="#9c6000">1:</text><text x="478.3" y="357.3" fill="#9c6000" textLength="39.2" lengthAdjust="spacing">5.500</text><text x="526.0" y="357.3" fill="#9c6000" textLength="32.8" lengthAdjust="spacing">GHz</text><text x="596.9" y="357.3" fill="#9c6000" textLength="45.0" lengthAdjust="spacing">-27.63</text><text x="646.0" y="357.3" fill="#9c6000" textLength="19.7" lengthAdjust="spacing">dB</text><text x="425.2" y="377.3" fill="#9c6000">2:</text><text x="478.3" y="377.3" fill="#9c6000" textLength="39.2" lengthAdjust="spacing">5.000</text><text x="526.0" y="377.3" fill="#9c6000" textLength="32.8" lengthAdjust="spacing">GHz</text><text x="596.9" y="377.3" fill="#9c6000" textLength="45.0" lengthAdjust="spacing">-31.30</text><text x="646.0" y="377.3" fill="#9c6000" textLength="19.7" lengthAdjust="spacing">dB</text><text x="425.2" y="397.3" fill="#9c6000">3:</text><text x="478.3" y="397.3" fill="#9c6000" textLength="39.2" lengthAdjust="spacing">6.000</text><text x="526.0" y="397.3" fill="#9c6000" textLength="32.8" lengthAdjust="spacing">GHz</text><text x="596.9" y="397.3" fill="#9c6000" textLength="45.0" lengthAdjust="spacing">-25.04</text><text x="646.0" y="397.3" fill="#9c6000" textLength="19.7" lengthAdjust="spacing">dB</text><text x="425.2" y="417.3" fill="#9c6000">8:</text><text x="478.3" y="417.3" fill="#9c6000" textLength="39.2" lengthAdjust="spacing">5.904</text><text x="526.0" y="417.3" fill="#9c6000" textLength="32.8" lengthAdjust="spacing">GHz</text><text x="596.9" y="417.3" fill="#9c6000" textLength="45.0" lengthAdjust="spacing">-24.11</text><text x="646.0" y="417.3" fill="#9c6000" textLength="19.7" lengthAdjust="spacing">dB</text><text x="425.2" y="437.3" fill="#00a3a6">1:</text><text x="478.3" y="437.3" fill="#00a3a6" textLength="39.2" lengthAdjust="spacing">5.500</text><text x="526.0" y="437.3" fill="#00a3a6" textLength="32.8" lengthAdjust="spacing">GHz</text><text x="605.9" y="437.3" fill="#00a3a6" textLength="36.0" lengthAdjust="spacing">-0.30</text><text x="646.0" y="437.3" fill="#00a3a6" textLength="19.7" lengthAdjust="spacing">dB</text><text x="425.2" y="457.3" fill="#00a3a6">2:</text><text x="478.3" y="457.3" fill="#00a3a6" textLength="39.2" lengthAdjust="spacing">5.000</text><text x="526.0" y="457.3" fill="#00a3a6" textLength="32.8" lengthAdjust="spacing">GHz</text><text x="605.9" y="457.3" fill="#00a3a6" textLength="36.0" lengthAdjust="spacing">-0.43</text><text x="646.0" y="457.3" fill="#00a3a6" textLength="19.7" lengthAdjust="spacing">dB</text><text x="425.2" y="477.3" fill="#00a3a6">3:</text><text x="478.3" y="477.3" fill="#00a3a6" textLength="39.2" lengthAdjust="spacing">6.000</text><text x="526.0" y="477.3" fill="#00a3a6" textLength="32.8" lengthAdjust="spacing">GHz</text><text x="605.9" y="477.3" fill="#00a3a6" textLength="36.0" lengthAdjust="spacing">-0.51</text><text x="646.0" y="477.3" fill="#00a3a6" textLength="19.7" lengthAdjust="spacing">dB</text><text x="425.2" y="497.3" fill="#00a3a6">4:</text><text x="478.3" y="497.3" fill="#00a3a6" textLength="39.2" lengthAdjust="spacing">4.450</text><text x="526.0" y="497.3" fill="#00a3a6" textLength="32.8" lengthAdjust="spacing">GHz</text><text x="596.9" y="497.3" fill="#00a3a6" textLength="45.0" lengthAdjust="spacing">-96.40</text><text x="646.0" y="497.3" fill="#00a3a6" textLength="19.7" lengthAdjust="spacing">dB</text><text x="425.2" y="517.3" fill="#00a3a6">5:</text><text x="478.3" y="517.3" fill="#00a3a6" textLength="39.2" lengthAdjust="spacing">4.800</text><text x="526.0" y="517.3" fill="#00a3a6" textLength="32.8" lengthAdjust="spacing">GHz</text><text x="596.9" y="517.3" fill="#00a3a6" textLength="45.0" lengthAdjust="spacing">-41.47</text><text x="646.0" y="517.3" fill="#00a3a6" textLength="19.7" lengthAdjust="spacing">dB</text><text x="425.2" y="537.3" fill="#00a3a6">6:</text><text x="478.3" y="537.3" fill="#00a3a6" textLength="39.2" lengthAdjust="spacing">6.200</text><text x="526.0" y="537.3" fill="#00a3a6" textLength="32.8" lengthAdjust="spacing">GHz</text><text x="596.9" y="537.3" fill="#00a3a6" textLength="45.0" lengthAdjust="spacing">-46.76</text><text x="646.0" y="537.3" fill="#00a3a6" textLength="19.7" lengthAdjust="spacing">dB</text><text x="425.2" y="557.3" fill="#00a3a6">7:</text><text x="478.3" y="557.3" fill="#00a3a6" textLength="39.2" lengthAdjust="spacing">6.400</text><text x="526.0" y="557.3" fill="#00a3a6" textLength="32.8" lengthAdjust="spacing">GHz</text><text x="596.9" y="557.3" fill="#00a3a6" textLength="45.0" lengthAdjust="spacing">-89.20</text><text x="646.0" y="557.3" fill="#00a3a6" textLength="19.7" lengthAdjust="spacing">dB</text><text x="412.5" y="556.8" fill="#00a3a6" font-size="13">&gt;</text><text x="425.2" y="577.3" fill="#de68fc">1:</text><text x="478.3" y="577.3" fill="#de68fc" textLength="39.2" lengthAdjust="spacing">5.500</text><text x="526.0" y="577.3" fill="#de68fc" textLength="32.8" lengthAdjust="spacing">GHz</text><text x="605.9" y="577.3" fill="#de68fc" textLength="36.0" lengthAdjust="spacing">-0.31</text><text x="646.0" y="577.3" fill="#de68fc" textLength="19.7" lengthAdjust="spacing">dB</text><text x="425.2" y="597.3" fill="#de68fc">2:</text><text x="478.3" y="597.3" fill="#de68fc" textLength="39.2" lengthAdjust="spacing">5.000</text><text x="526.0" y="597.3" fill="#de68fc" textLength="32.8" lengthAdjust="spacing">GHz</text><text x="605.9" y="597.3" fill="#de68fc" textLength="36.0" lengthAdjust="spacing">-0.44</text><text x="646.0" y="597.3" fill="#de68fc" textLength="19.7" lengthAdjust="spacing">dB</text><text x="425.2" y="617.3" fill="#de68fc">3:</text><text x="478.3" y="617.3" fill="#de68fc" textLength="39.2" lengthAdjust="spacing">6.000</text><text x="526.0" y="617.3" fill="#de68fc" textLength="32.8" lengthAdjust="spacing">GHz</text><text x="605.9" y="617.3" fill="#de68fc" textLength="36.0" lengthAdjust="spacing">-0.52</text><text x="646.0" y="617.3" fill="#de68fc" textLength="19.7" lengthAdjust="spacing">dB</text><text x="425.2" y="637.3" fill="#de68fc">8:</text><text x="478.3" y="637.3" fill="#de68fc" textLength="39.2" lengthAdjust="spacing">5.373</text><text x="526.0" y="637.3" fill="#de68fc" textLength="32.8" lengthAdjust="spacing">GHz</text><text x="605.9" y="637.3" fill="#de68fc" textLength="36.0" lengthAdjust="spacing">-0.30</text><text x="646.0" y="637.3" fill="#de68fc" textLength="19.7" lengthAdjust="spacing">dB</text><text x="425.2" y="657.3" fill="#34f42c">1:</text><text x="478.3" y="657.3" fill="#34f42c" textLength="39.2" lengthAdjust="spacing">5.500</text><text x="526.0" y="657.3" fill="#34f42c" textLength="32.8" lengthAdjust="spacing">GHz</text><text x="596.9" y="657.3" fill="#34f42c" textLength="45.0" lengthAdjust="spacing">-27.95</text><text x="646.0" y="657.3" fill="#34f42c" textLength="19.7" lengthAdjust="spacing">dB</text><text x="425.2" y="677.3" fill="#34f42c">2:</text><text x="478.3" y="677.3" fill="#34f42c" textLength="39.2" lengthAdjust="spacing">5.000</text><text x="526.0" y="677.3" fill="#34f42c" textLength="32.8" lengthAdjust="spacing">GHz</text><text x="596.9" y="677.3" fill="#34f42c" textLength="45.0" lengthAdjust="spacing">-29.17</text><text x="646.0" y="677.3" fill="#34f42c" textLength="19.7" lengthAdjust="spacing">dB</text><text x="425.2" y="697.3" fill="#34f42c">3:</text><text x="478.3" y="697.3" fill="#34f42c" textLength="39.2" lengthAdjust="spacing">6.000</text><text x="526.0" y="697.3" fill="#34f42c" textLength="32.8" lengthAdjust="spacing">GHz</text><text x="596.9" y="697.3" fill="#34f42c" textLength="45.0" lengthAdjust="spacing">-25.26</text><text x="646.0" y="697.3" fill="#34f42c" textLength="19.7" lengthAdjust="spacing">dB</text><text x="425.2" y="717.3" fill="#34f42c">8:</text><text x="478.3" y="717.3" fill="#34f42c" textLength="39.2" lengthAdjust="spacing">5.904</text><text x="526.0" y="717.3" fill="#34f42c" textLength="32.8" lengthAdjust="spacing">GHz</text><text x="596.9" y="717.3" fill="#34f42c" textLength="45.0" lengthAdjust="spacing">-24.57</text><text x="646.0" y="717.3" fill="#34f42c" textLength="19.7" lengthAdjust="spacing">dB</text>
<path d="M78 127 L87.6 133.8 L78 140.6 Z" fill="#00a8a8"/><path d="M1020 127 L1009.5 133.8 L1020 140.6 Z" fill="#00a8a8"/><path d="M1020 418.7 L1009.5 425.5 L1020 432.3 Z" fill="#e070f0"/><rect x="16" y="723" width="27" height="19.5" fill="#c8c8c8"/><text x="29.5" y="741.3" fill="#000" text-anchor="middle">1</text><text x="87.3" y="741.6" fill="#000" textLength="43.0" lengthAdjust="spacing">&gt;Ch1:</text><text x="137.5" y="741.6" fill="#000" textLength="34.0" lengthAdjust="spacing">Start</text><text x="184.4" y="741.6" fill="#000" textLength="93.6" lengthAdjust="spacing">4.32500 GHz</text><path d="M285.2 735 h21.8" stroke="#9c6000" stroke-width="2" shape-rendering="crispEdges"/><path d="M311.8 735 h21.8" stroke="#00a3a6" stroke-width="2" shape-rendering="crispEdges"/><path d="M338.4 735 h21.8" stroke="#de68fc" stroke-width="2" shape-rendering="crispEdges"/><path d="M365.0 735 h21.8" stroke="#34f42c" stroke-width="2" shape-rendering="crispEdges"/><text x="508.0" y="741.6" fill="#000" textLength="20.0" lengthAdjust="spacing">RF</text><text x="545.0" y="741.6" fill="#000" textLength="68.0" lengthAdjust="spacing">0.00 dBm</text><text x="871.5" y="741.6" fill="#000" textLength="33.5" lengthAdjust="spacing">Stop</text><text x="913.5" y="741.6" fill="#000" textLength="94.0" lengthAdjust="spacing">6.52500 GHz</text></svg>
</body></html>
